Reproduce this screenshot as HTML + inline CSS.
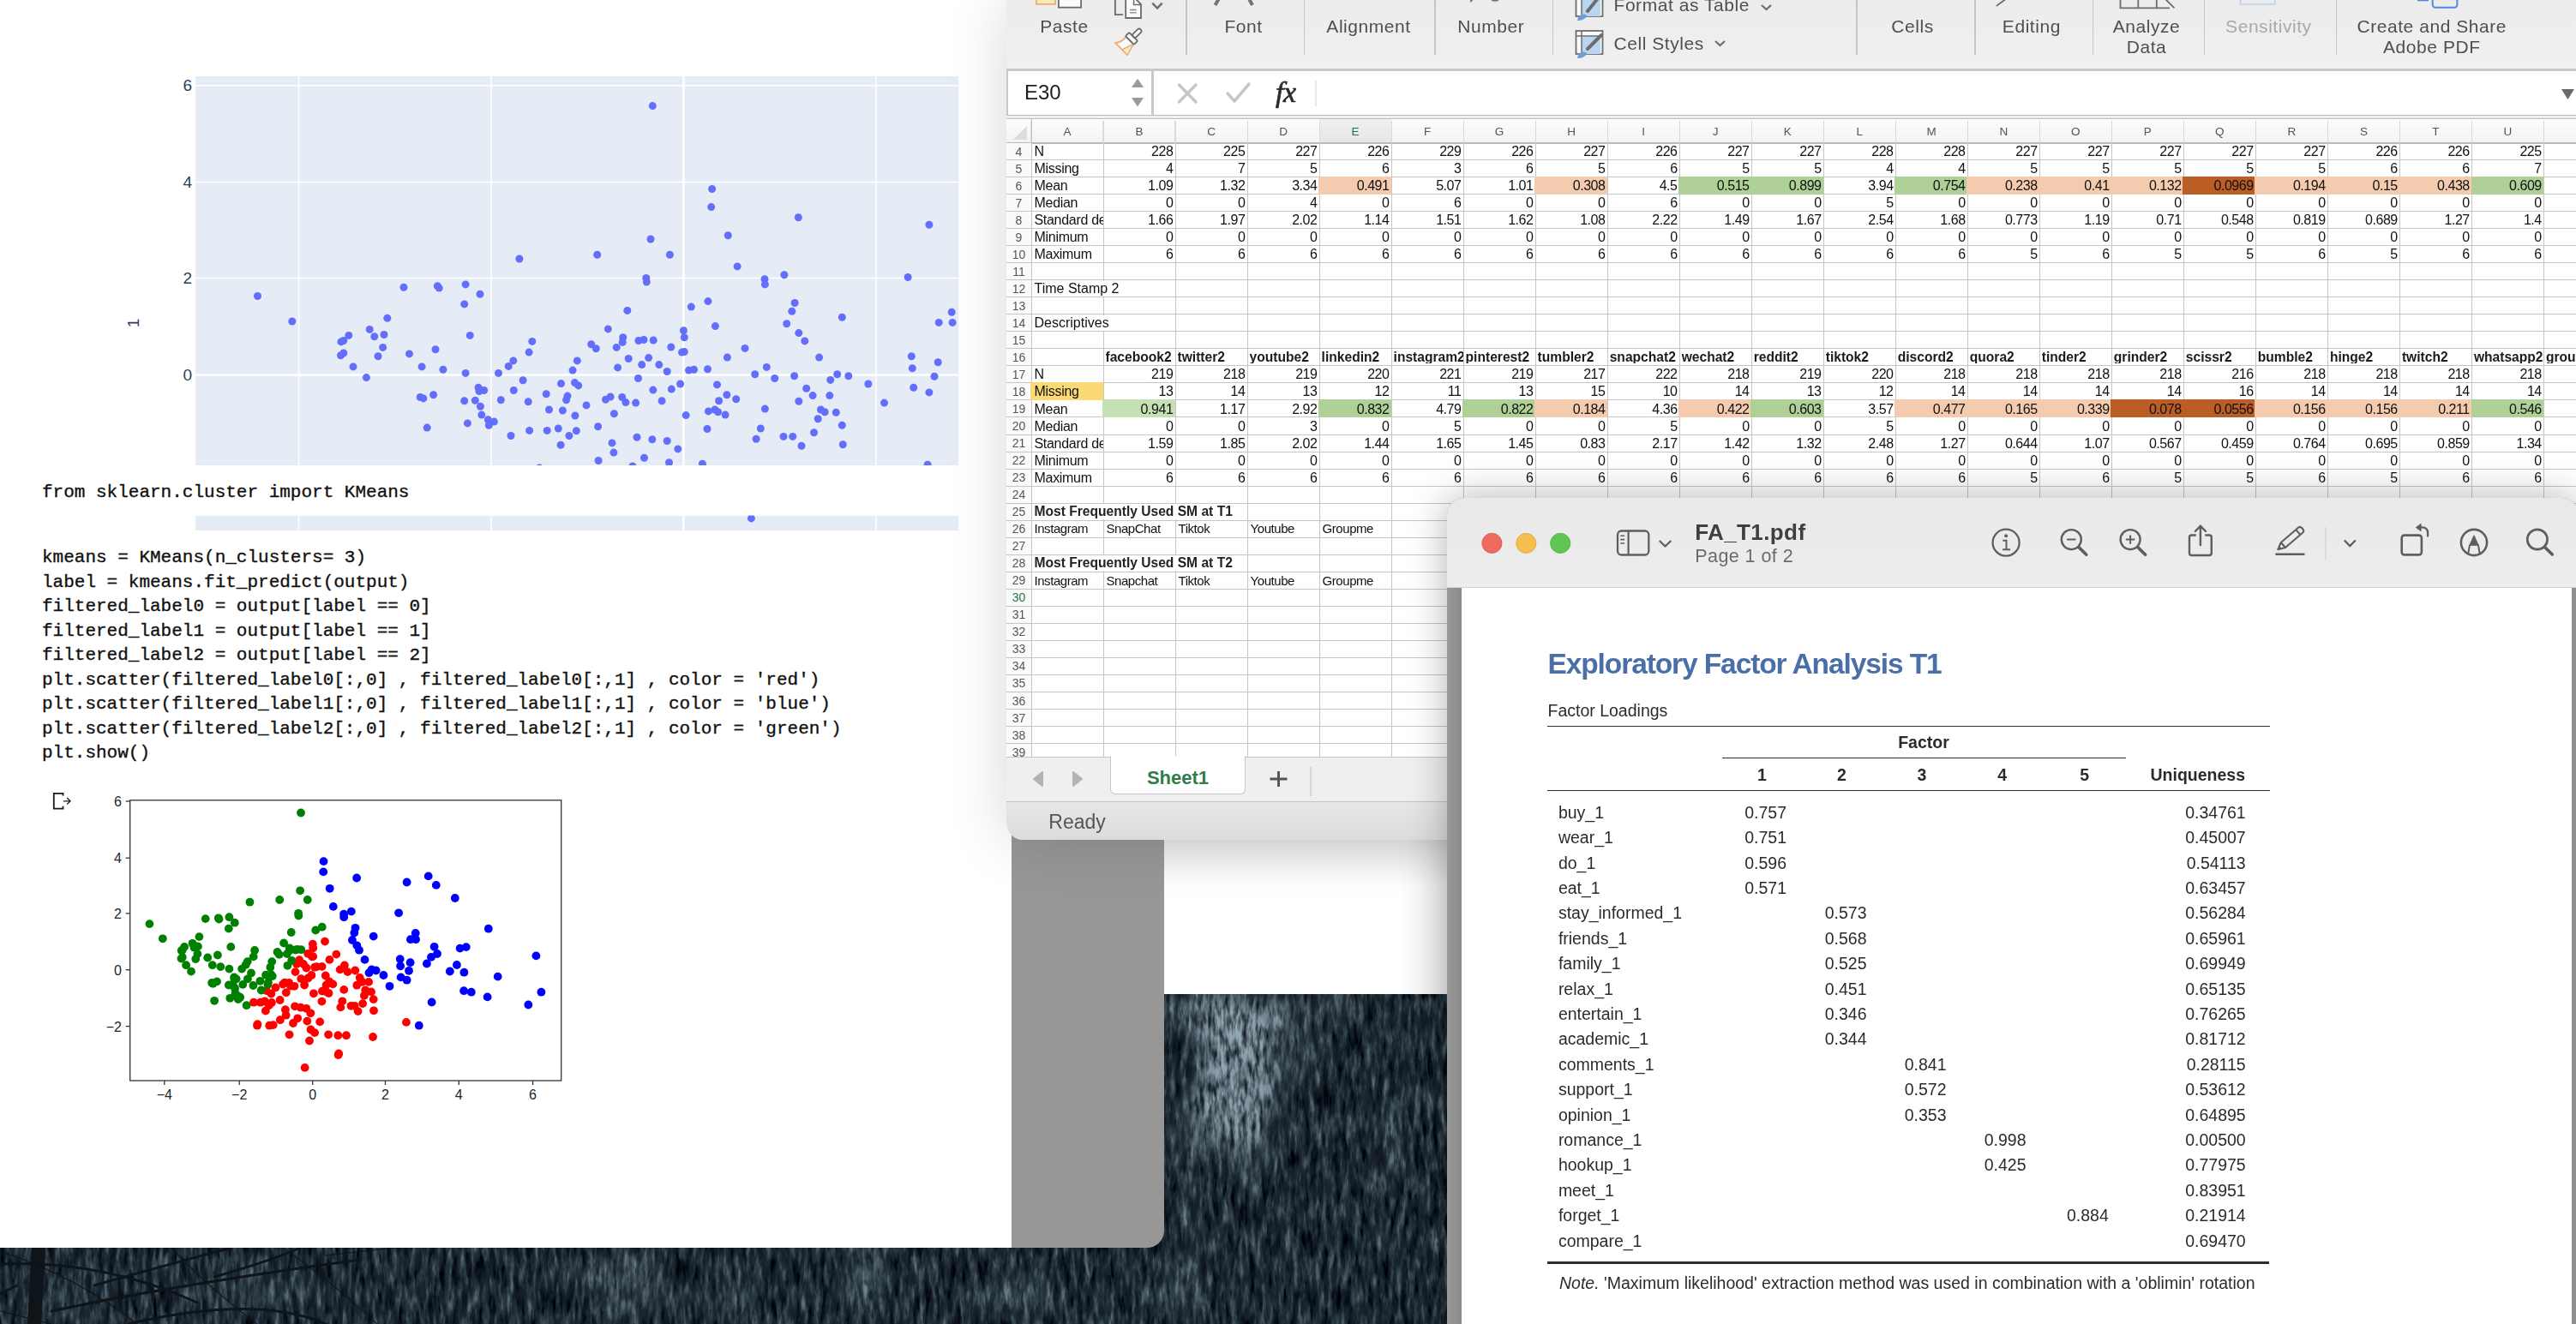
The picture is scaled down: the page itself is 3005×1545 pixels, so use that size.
<!DOCTYPE html>
<html><head><meta charset="utf-8"><style>
html,body{margin:0;padding:0;}
body{width:3005px;height:1545px;position:relative;overflow:hidden;background:#24313b;font-family:'Liberation Sans', sans-serif;}
.a{position:absolute;}
.t{position:absolute;white-space:pre;line-height:1;}



.xl{position:absolute;left:1174px;top:0;width:1831px;height:980px;overflow:hidden;border-bottom-left-radius:20px;background:#fff;box-shadow:0 0 70px rgba(0,0,0,0.16);}
.xt{position:absolute;white-space:pre;line-height:1;font-family:'Liberation Sans',sans-serif;}
.rb{position:absolute;white-space:pre;line-height:1;font-family:'Liberation Sans',sans-serif;font-size:21px;letter-spacing:0.55px;color:#4f4f4f;transform:translateX(-50%);}


.pdf{position:absolute;left:1687.7px;top:581px;width:1320px;height:1000px;border-radius:20px 20px 0 0;overflow:hidden;background:#8e8e8e;box-shadow:0 0 45px rgba(0,0,0,0.30);}
.pt{position:absolute;white-space:pre;line-height:1;font-family:'Liberation Sans',sans-serif;color:#2b2b2b;}
</style></head><body>
<svg style="position:absolute;left:0;top:0" width="3005" height="1545">
<filter id="fz" x="0" y="0" width="100%" height="100%" color-interpolation-filters="sRGB">
<feTurbulence type="fractalNoise" baseFrequency="0.14 0.03" numOctaves="4" seed="7"/>
<feColorMatrix type="matrix" values="0.75 0 0 0 -0.24  0.8 0 0 0 -0.21  0.8 0 0 0 -0.17  0 0 0 0 1"/>
</filter>
<filter id="fb" x="-50%" y="-50%" width="200%" height="200%"><feGaussianBlur stdDeviation="11"/></filter>
<filter id="fn2" x="0" y="0" width="100%" height="100%" color-interpolation-filters="sRGB">
<feTurbulence type="fractalNoise" baseFrequency="0.2 0.05" numOctaves="3" seed="11"/>
<feColorMatrix type="matrix" values="0 0 0 0 0.08  0 0 0 0 0.12  0 0 0 0 0.15  2.2 0 0 0 -0.75"/>
</filter>
<rect x="0" y="0" width="3005" height="1545" filter="url(#fz)"/>
<g filter="url(#fb)"><ellipse cx="1445" cy="1255" rx="45" ry="85" fill="#9cb3bd" opacity="0.85"/><ellipse cx="1415" cy="1185" rx="40" ry="30" fill="#9cb3bd" opacity="0.75"/><ellipse cx="1480" cy="1190" rx="35" ry="28" fill="#9cb3bd" opacity="0.55"/><ellipse cx="1400" cy="1310" rx="22" ry="45" fill="#9cb3bd" opacity="0.50"/><ellipse cx="1455" cy="1345" rx="20" ry="30" fill="#9cb3bd" opacity="0.45"/><ellipse cx="1625" cy="1330" rx="9" ry="55" fill="#9cb3bd" opacity="0.40"/><ellipse cx="1560" cy="1172" rx="28" ry="14" fill="#9cb3bd" opacity="0.35"/><ellipse cx="1385" cy="1420" rx="10" ry="28" fill="#9cb3bd" opacity="0.30"/><ellipse cx="1520" cy="1230" rx="18" ry="30" fill="#9cb3bd" opacity="0.30"/><ellipse cx="730" cy="1500" rx="45" ry="35" fill="#9cb3bd" opacity="0.35"/><ellipse cx="1010" cy="1490" rx="22" ry="40" fill="#9cb3bd" opacity="0.40"/><ellipse cx="860" cy="1520" rx="25" ry="22" fill="#9cb3bd" opacity="0.25"/><ellipse cx="1190" cy="1510" rx="35" ry="28" fill="#9cb3bd" opacity="0.30"/><ellipse cx="1380" cy="1500" rx="25" ry="35" fill="#9cb3bd" opacity="0.30"/><ellipse cx="80" cy="1520" rx="60" ry="20" fill="#9cb3bd" opacity="0.20"/><ellipse cx="300" cy="1500" rx="80" ry="30" fill="#9cb3bd" opacity="0.15"/></g>
<rect x="0" y="1100" width="1700" height="445" filter="url(#fn2)"/>
<g stroke="#0e1418" fill="none" stroke-linecap="round">
<path d="M45 1456 L40 1545" stroke-width="16"/>
<path d="M0 1475 Q120 1470 230 1520 M60 1530 Q200 1500 420 1470 M110 1500 Q180 1480 270 1456 M20 1500 L0 1510 M150 1545 Q300 1510 380 1545 M250 1490 Q320 1470 350 1456" stroke-width="3"/>
<path d="M0 1460 Q90 1490 160 1545 M200 1456 Q240 1500 300 1545 M330 1456 Q380 1490 440 1545 M380 1465 L460 1456 M0 1530 L60 1545" stroke-width="1.5" opacity="0.8"/>
</g>
</svg>
<div class="a" style="left:0;top:0;width:1180px;height:1456px;background:#fff"></div>
<div class="a" style="left:1180px;top:900px;width:178px;height:556px;background:#979797;border-bottom-right-radius:20px"></div>
<div class="a" style="left:1358px;top:900px;width:330px;height:260px;background:#fff"></div>
<div class="a" style="left:1358px;top:975px;width:330px;height:60px;background:linear-gradient(rgba(0,0,0,0.10),rgba(0,0,0,0))"></div>
<div class="a" style="left:1630px;top:975px;width:58px;height:185px;background:linear-gradient(90deg,rgba(0,0,0,0),rgba(0,0,0,0.07))"></div>
<svg class="a" style="left:0;top:0" width="1180" height="1456">
<defs><clipPath id="pc"><rect x="227.6" y="89.0" width="890.5" height="454.0"/></clipPath>
<clipPath id="pc2"><rect x="227.6" y="601.6" width="890.5" height="17.6"/></clipPath></defs>
<g clip-path="url(#pc)">
<rect x="227.6" y="89.0" width="890.5" height="454.0" fill="#e5ecf6"/>
<line x1="348.55" y1="89.0" x2="348.55" y2="543.0" stroke="#fff" stroke-width="1.5"/>
<line x1="572.90" y1="89.0" x2="572.90" y2="543.0" stroke="#fff" stroke-width="1.5"/>
<line x1="797.35" y1="89.0" x2="797.35" y2="543.0" stroke="#fff" stroke-width="2.5"/>
<line x1="1021.80" y1="89.0" x2="1021.80" y2="543.0" stroke="#fff" stroke-width="1.5"/>
<line x1="227.6" y1="99.7" x2="1118.1" y2="99.7" stroke="#fff" stroke-width="1.5"/>
<line x1="227.6" y1="212.5" x2="1118.1" y2="212.5" stroke="#fff" stroke-width="1.5"/>
<line x1="227.6" y1="324.4" x2="1118.1" y2="324.4" stroke="#fff" stroke-width="1.5"/>
<line x1="227.6" y1="437.4" x2="1118.1" y2="437.4" stroke="#fff" stroke-width="2.5"/>
<circle cx="761.3" cy="123.6" r="4.5" fill="#636efa"/>
<circle cx="830.6" cy="220.5" r="4.5" fill="#636efa"/>
<circle cx="829.7" cy="241.6" r="4.5" fill="#636efa"/>
<circle cx="931.3" cy="253.7" r="4.5" fill="#636efa"/>
<circle cx="1083.9" cy="262.2" r="4.5" fill="#636efa"/>
<circle cx="759.0" cy="279.0" r="4.5" fill="#636efa"/>
<circle cx="849.3" cy="274.8" r="4.5" fill="#636efa"/>
<circle cx="696.7" cy="297.3" r="4.5" fill="#636efa"/>
<circle cx="781.4" cy="297.3" r="4.5" fill="#636efa"/>
<circle cx="605.9" cy="302.0" r="4.5" fill="#636efa"/>
<circle cx="860.1" cy="310.9" r="4.5" fill="#636efa"/>
<circle cx="753.8" cy="324.4" r="4.5" fill="#636efa"/>
<circle cx="754.3" cy="329.1" r="4.5" fill="#636efa"/>
<circle cx="914.9" cy="320.7" r="4.5" fill="#636efa"/>
<circle cx="892.0" cy="325.8" r="4.5" fill="#636efa"/>
<circle cx="892.4" cy="331.9" r="4.5" fill="#636efa"/>
<circle cx="1059.1" cy="323.5" r="4.5" fill="#636efa"/>
<circle cx="300.5" cy="345.5" r="4.5" fill="#636efa"/>
<circle cx="471.0" cy="335.2" r="4.5" fill="#636efa"/>
<circle cx="510.3" cy="333.8" r="4.5" fill="#636efa"/>
<circle cx="512.2" cy="336.1" r="4.5" fill="#636efa"/>
<circle cx="543.1" cy="331.9" r="4.5" fill="#636efa"/>
<circle cx="560.0" cy="343.2" r="4.5" fill="#636efa"/>
<circle cx="541.7" cy="354.9" r="4.5" fill="#636efa"/>
<circle cx="825.9" cy="351.6" r="4.5" fill="#636efa"/>
<circle cx="927.1" cy="353.5" r="4.5" fill="#636efa"/>
<circle cx="806.3" cy="358.1" r="4.5" fill="#636efa"/>
<circle cx="731.8" cy="362.4" r="4.5" fill="#636efa"/>
<circle cx="923.8" cy="363.3" r="4.5" fill="#636efa"/>
<circle cx="451.8" cy="371.3" r="4.5" fill="#636efa"/>
<circle cx="982.3" cy="370.3" r="4.5" fill="#636efa"/>
<circle cx="340.8" cy="375.0" r="4.5" fill="#636efa"/>
<circle cx="1110.2" cy="364.2" r="4.5" fill="#636efa"/>
<circle cx="1095.2" cy="376.4" r="4.5" fill="#636efa"/>
<circle cx="1111.1" cy="376.4" r="4.5" fill="#636efa"/>
<circle cx="917.7" cy="377.8" r="4.5" fill="#636efa"/>
<circle cx="834.4" cy="380.6" r="4.5" fill="#636efa"/>
<circle cx="406.8" cy="391.4" r="4.5" fill="#636efa"/>
<circle cx="400.8" cy="397.5" r="4.5" fill="#636efa"/>
<circle cx="397.9" cy="398.9" r="4.5" fill="#636efa"/>
<circle cx="431.2" cy="384.4" r="4.5" fill="#636efa"/>
<circle cx="448.0" cy="390.5" r="4.5" fill="#636efa"/>
<circle cx="436.8" cy="392.8" r="4.5" fill="#636efa"/>
<circle cx="548.3" cy="391.4" r="4.5" fill="#636efa"/>
<circle cx="709.3" cy="383.9" r="4.5" fill="#636efa"/>
<circle cx="931.8" cy="388.6" r="4.5" fill="#636efa"/>
<circle cx="726.7" cy="393.7" r="4.5" fill="#636efa"/>
<circle cx="726.2" cy="399.4" r="4.5" fill="#636efa"/>
<circle cx="744.9" cy="397.5" r="4.5" fill="#636efa"/>
<circle cx="751.0" cy="396.5" r="4.5" fill="#636efa"/>
<circle cx="762.2" cy="397.0" r="4.5" fill="#636efa"/>
<circle cx="938.8" cy="397.9" r="4.5" fill="#636efa"/>
<circle cx="797.4" cy="385.8" r="4.5" fill="#636efa"/>
<circle cx="798.3" cy="393.7" r="4.5" fill="#636efa"/>
<circle cx="620.8" cy="398.4" r="4.5" fill="#636efa"/>
<circle cx="446.6" cy="405.4" r="4.5" fill="#636efa"/>
<circle cx="508.0" cy="407.8" r="4.5" fill="#636efa"/>
<circle cx="782.8" cy="405.0" r="4.5" fill="#636efa"/>
<circle cx="719.2" cy="405.4" r="4.5" fill="#636efa"/>
<circle cx="689.7" cy="401.7" r="4.5" fill="#636efa"/>
<circle cx="695.3" cy="406.8" r="4.5" fill="#636efa"/>
<circle cx="869.0" cy="406.4" r="4.5" fill="#636efa"/>
<circle cx="795.5" cy="411.1" r="4.5" fill="#636efa"/>
<circle cx="798.3" cy="410.6" r="4.5" fill="#636efa"/>
<circle cx="617.1" cy="411.1" r="4.5" fill="#636efa"/>
<circle cx="477.5" cy="412.9" r="4.5" fill="#636efa"/>
<circle cx="397.5" cy="414.8" r="4.5" fill="#636efa"/>
<circle cx="400.8" cy="412.0" r="4.5" fill="#636efa"/>
<circle cx="441.0" cy="415.7" r="4.5" fill="#636efa"/>
<circle cx="733.2" cy="418.5" r="4.5" fill="#636efa"/>
<circle cx="756.6" cy="417.6" r="4.5" fill="#636efa"/>
<circle cx="848.4" cy="417.1" r="4.5" fill="#636efa"/>
<circle cx="955.6" cy="417.1" r="4.5" fill="#636efa"/>
<circle cx="1063.3" cy="415.7" r="4.5" fill="#636efa"/>
<circle cx="673.3" cy="420.9" r="4.5" fill="#636efa"/>
<circle cx="598.8" cy="420.9" r="4.5" fill="#636efa"/>
<circle cx="1094.2" cy="422.8" r="4.5" fill="#636efa"/>
<circle cx="412.0" cy="427.9" r="4.5" fill="#636efa"/>
<circle cx="492.1" cy="427.9" r="4.5" fill="#636efa"/>
<circle cx="593.2" cy="427.4" r="4.5" fill="#636efa"/>
<circle cx="720.6" cy="428.9" r="4.5" fill="#636efa"/>
<circle cx="748.7" cy="425.6" r="4.5" fill="#636efa"/>
<circle cx="768.8" cy="425.6" r="4.5" fill="#636efa"/>
<circle cx="894.3" cy="428.4" r="4.5" fill="#636efa"/>
<circle cx="1064.3" cy="429.8" r="4.5" fill="#636efa"/>
<circle cx="516.9" cy="431.2" r="4.5" fill="#636efa"/>
<circle cx="668.1" cy="432.1" r="4.5" fill="#636efa"/>
<circle cx="778.2" cy="433.5" r="4.5" fill="#636efa"/>
<circle cx="803.5" cy="432.1" r="4.5" fill="#636efa"/>
<circle cx="809.5" cy="431.2" r="4.5" fill="#636efa"/>
<circle cx="825.5" cy="430.7" r="4.5" fill="#636efa"/>
<circle cx="543.1" cy="435.4" r="4.5" fill="#636efa"/>
<circle cx="581.5" cy="435.4" r="4.5" fill="#636efa"/>
<circle cx="880.7" cy="436.8" r="4.5" fill="#636efa"/>
<circle cx="427.4" cy="440.6" r="4.5" fill="#636efa"/>
<circle cx="744.5" cy="441.5" r="4.5" fill="#636efa"/>
<circle cx="903.7" cy="441.5" r="4.5" fill="#636efa"/>
<circle cx="926.6" cy="438.7" r="4.5" fill="#636efa"/>
<circle cx="976.7" cy="436.8" r="4.5" fill="#636efa"/>
<circle cx="989.8" cy="438.7" r="4.5" fill="#636efa"/>
<circle cx="1090.0" cy="439.2" r="4.5" fill="#636efa"/>
<circle cx="610.1" cy="443.8" r="4.5" fill="#636efa"/>
<circle cx="968.7" cy="443.4" r="4.5" fill="#636efa"/>
<circle cx="654.5" cy="447.6" r="4.5" fill="#636efa"/>
<circle cx="670.5" cy="446.6" r="4.5" fill="#636efa"/>
<circle cx="674.7" cy="449.9" r="4.5" fill="#636efa"/>
<circle cx="793.6" cy="448.0" r="4.5" fill="#636efa"/>
<circle cx="1012.8" cy="448.0" r="4.5" fill="#636efa"/>
<circle cx="558.1" cy="452.3" r="4.5" fill="#636efa"/>
<circle cx="559.0" cy="456.5" r="4.5" fill="#636efa"/>
<circle cx="564.6" cy="455.5" r="4.5" fill="#636efa"/>
<circle cx="599.3" cy="455.5" r="4.5" fill="#636efa"/>
<circle cx="761.8" cy="455.1" r="4.5" fill="#636efa"/>
<circle cx="783.3" cy="454.1" r="4.5" fill="#636efa"/>
<circle cx="940.7" cy="453.2" r="4.5" fill="#636efa"/>
<circle cx="1065.7" cy="452.3" r="4.5" fill="#636efa"/>
<circle cx="637.2" cy="459.8" r="4.5" fill="#636efa"/>
<circle cx="662.0" cy="462.1" r="4.5" fill="#636efa"/>
<circle cx="505.6" cy="460.7" r="4.5" fill="#636efa"/>
<circle cx="490.2" cy="463.5" r="4.5" fill="#636efa"/>
<circle cx="493.9" cy="464.9" r="4.5" fill="#636efa"/>
<circle cx="584.3" cy="466.8" r="4.5" fill="#636efa"/>
<circle cx="541.7" cy="467.7" r="4.5" fill="#636efa"/>
<circle cx="554.3" cy="467.2" r="4.5" fill="#636efa"/>
<circle cx="616.2" cy="468.7" r="4.5" fill="#636efa"/>
<circle cx="660.6" cy="466.8" r="4.5" fill="#636efa"/>
<circle cx="706.5" cy="466.3" r="4.5" fill="#636efa"/>
<circle cx="712.1" cy="463.0" r="4.5" fill="#636efa"/>
<circle cx="725.7" cy="463.5" r="4.5" fill="#636efa"/>
<circle cx="729.9" cy="469.6" r="4.5" fill="#636efa"/>
<circle cx="741.6" cy="470.1" r="4.5" fill="#636efa"/>
<circle cx="772.1" cy="467.7" r="4.5" fill="#636efa"/>
<circle cx="838.6" cy="467.7" r="4.5" fill="#636efa"/>
<circle cx="847.9" cy="460.7" r="4.5" fill="#636efa"/>
<circle cx="858.7" cy="465.8" r="4.5" fill="#636efa"/>
<circle cx="931.8" cy="468.2" r="4.5" fill="#636efa"/>
<circle cx="948.1" cy="461.6" r="4.5" fill="#636efa"/>
<circle cx="967.8" cy="461.6" r="4.5" fill="#636efa"/>
<circle cx="1031.5" cy="470.1" r="4.5" fill="#636efa"/>
<circle cx="1083.9" cy="457.9" r="4.5" fill="#636efa"/>
<circle cx="560.4" cy="474.3" r="4.5" fill="#636efa"/>
<circle cx="684.0" cy="472.9" r="4.5" fill="#636efa"/>
<circle cx="640.5" cy="478.0" r="4.5" fill="#636efa"/>
<circle cx="656.4" cy="479.0" r="4.5" fill="#636efa"/>
<circle cx="892.4" cy="477.1" r="4.5" fill="#636efa"/>
<circle cx="826.4" cy="479.9" r="4.5" fill="#636efa"/>
<circle cx="833.9" cy="478.0" r="4.5" fill="#636efa"/>
<circle cx="837.6" cy="480.8" r="4.5" fill="#636efa"/>
<circle cx="957.5" cy="478.0" r="4.5" fill="#636efa"/>
<circle cx="962.2" cy="480.8" r="4.5" fill="#636efa"/>
<circle cx="975.3" cy="481.3" r="4.5" fill="#636efa"/>
<circle cx="561.8" cy="484.1" r="4.5" fill="#636efa"/>
<circle cx="670.9" cy="485.0" r="4.5" fill="#636efa"/>
<circle cx="716.4" cy="482.7" r="4.5" fill="#636efa"/>
<circle cx="800.2" cy="484.6" r="4.5" fill="#636efa"/>
<circle cx="846.1" cy="484.1" r="4.5" fill="#636efa"/>
<circle cx="954.2" cy="488.8" r="4.5" fill="#636efa"/>
<circle cx="569.3" cy="489.7" r="4.5" fill="#636efa"/>
<circle cx="576.4" cy="492.1" r="4.5" fill="#636efa"/>
<circle cx="570.3" cy="496.3" r="4.5" fill="#636efa"/>
<circle cx="545.4" cy="493.9" r="4.5" fill="#636efa"/>
<circle cx="498.2" cy="499.1" r="4.5" fill="#636efa"/>
<circle cx="638.2" cy="502.4" r="4.5" fill="#636efa"/>
<circle cx="617.6" cy="502.4" r="4.5" fill="#636efa"/>
<circle cx="651.3" cy="500.0" r="4.5" fill="#636efa"/>
<circle cx="672.3" cy="502.8" r="4.5" fill="#636efa"/>
<circle cx="697.6" cy="497.7" r="4.5" fill="#636efa"/>
<circle cx="825.0" cy="500.5" r="4.5" fill="#636efa"/>
<circle cx="887.3" cy="500.0" r="4.5" fill="#636efa"/>
<circle cx="982.3" cy="496.3" r="4.5" fill="#636efa"/>
<circle cx="949.5" cy="504.7" r="4.5" fill="#636efa"/>
<circle cx="596.0" cy="508.5" r="4.5" fill="#636efa"/>
<circle cx="663.9" cy="508.5" r="4.5" fill="#636efa"/>
<circle cx="743.0" cy="510.3" r="4.5" fill="#636efa"/>
<circle cx="760.8" cy="512.7" r="4.5" fill="#636efa"/>
<circle cx="882.1" cy="512.2" r="4.5" fill="#636efa"/>
<circle cx="914.0" cy="509.4" r="4.5" fill="#636efa"/>
<circle cx="924.7" cy="509.4" r="4.5" fill="#636efa"/>
<circle cx="778.2" cy="514.5" r="4.5" fill="#636efa"/>
<circle cx="714.0" cy="516.9" r="4.5" fill="#636efa"/>
<circle cx="654.1" cy="519.2" r="4.5" fill="#636efa"/>
<circle cx="983.3" cy="518.8" r="4.5" fill="#636efa"/>
<circle cx="935.0" cy="520.2" r="4.5" fill="#636efa"/>
<circle cx="790.8" cy="523.9" r="4.5" fill="#636efa"/>
<circle cx="715.9" cy="528.1" r="4.5" fill="#636efa"/>
<circle cx="751.5" cy="534.2" r="4.5" fill="#636efa"/>
<circle cx="698.1" cy="537.5" r="4.5" fill="#636efa"/>
<circle cx="780.5" cy="539.8" r="4.5" fill="#636efa"/>
<circle cx="819.4" cy="541.2" r="4.5" fill="#636efa"/>
<circle cx="1082.1" cy="542.2" r="4.5" fill="#636efa"/>
<circle cx="737.9" cy="544.0" r="4.5" fill="#636efa"/>
<circle cx="629.3" cy="545.9" r="4.5" fill="#636efa"/>
<circle cx="876.4" cy="604.9" r="4.5" fill="#636efa"/>
<circle cx="836.5" cy="448.9" r="4.5" fill="#636efa"/>
<circle cx="1149.4" cy="250.0" r="4.5" fill="#636efa"/>
<circle cx="1173.0" cy="268.1" r="4.5" fill="#636efa"/>
<circle cx="1230.5" cy="294.0" r="4.5" fill="#636efa"/>
<circle cx="1332.2" cy="355.1" r="4.5" fill="#636efa"/>
<circle cx="1167.5" cy="391.3" r="4.5" fill="#636efa"/>
<circle cx="1176.2" cy="405.3" r="4.5" fill="#636efa"/>
<circle cx="1158.0" cy="412.0" r="4.5" fill="#636efa"/>
<circle cx="1144.6" cy="424.9" r="4.5" fill="#636efa"/>
<circle cx="1236.1" cy="427.5" r="4.5" fill="#636efa"/>
<circle cx="1214.8" cy="440.4" r="4.5" fill="#636efa"/>
<circle cx="1258.1" cy="442.5" r="4.5" fill="#636efa"/>
<circle cx="1245.5" cy="394.4" r="4.5" fill="#636efa"/>
<circle cx="1264.4" cy="391.8" r="4.5" fill="#636efa"/>
<circle cx="1360.6" cy="450.8" r="4.5" fill="#636efa"/>
<circle cx="1257.4" cy="479.3" r="4.5" fill="#636efa"/>
<circle cx="1280.2" cy="481.8" r="4.5" fill="#636efa"/>
<circle cx="1329.1" cy="491.7" r="4.5" fill="#636efa"/>
<circle cx="1477.3" cy="409.4" r="4.5" fill="#636efa"/>
<circle cx="1493.1" cy="481.8" r="4.5" fill="#636efa"/>
<circle cx="1453.6" cy="507.2" r="4.5" fill="#636efa"/>
<circle cx="1159.6" cy="502.0" r="4.5" fill="#636efa"/>
<circle cx="1121.0" cy="548.6" r="4.5" fill="#636efa"/>
<circle cx="628.3" cy="548.6" r="4.5" fill="#636efa"/>
<circle cx="665.3" cy="548.6" r="4.5" fill="#636efa"/>
<circle cx="677.2" cy="547.6" r="4.5" fill="#636efa"/>
<circle cx="726.0" cy="566.7" r="4.5" fill="#636efa"/>
<circle cx="787.5" cy="579.1" r="4.5" fill="#636efa"/>
<circle cx="803.3" cy="563.1" r="4.5" fill="#636efa"/>
<circle cx="791.5" cy="556.9" r="4.5" fill="#636efa"/>
<circle cx="845.1" cy="566.7" r="4.5" fill="#636efa"/>
<circle cx="874.2" cy="568.3" r="4.5" fill="#636efa"/>
<circle cx="899.5" cy="568.3" r="4.5" fill="#636efa"/>
<circle cx="980.7" cy="571.4" r="4.5" fill="#636efa"/>
<circle cx="875.0" cy="607.6" r="4.5" fill="#636efa"/>
<circle cx="773.3" cy="633.0" r="4.5" fill="#636efa"/>
</g>
<g clip-path="url(#pc2)">
<rect x="227.6" y="601.6" width="890.5" height="17.6" fill="#e5ecf6"/>
<line x1="348.55" y1="601.6" x2="348.55" y2="619.2" stroke="#fff" stroke-width="1.5"/>
<line x1="572.90" y1="601.6" x2="572.90" y2="619.2" stroke="#fff" stroke-width="1.5"/>
<line x1="797.35" y1="601.6" x2="797.35" y2="619.2" stroke="#fff" stroke-width="2.5"/>
<line x1="1021.80" y1="601.6" x2="1021.80" y2="619.2" stroke="#fff" stroke-width="1.5"/>
<circle cx="876.4" cy="604.9" r="4.5" fill="#636efa"/>
</g>
<text x="224" y="106.3" font-family='Liberation Sans' font-size="19" fill="#2a3f5f" text-anchor="end">6</text>
<text x="224" y="219.1" font-family='Liberation Sans' font-size="19" fill="#2a3f5f" text-anchor="end">4</text>
<text x="224" y="331.0" font-family='Liberation Sans' font-size="19" fill="#2a3f5f" text-anchor="end">2</text>
<text x="224" y="443.9" font-family='Liberation Sans' font-size="19" fill="#2a3f5f" text-anchor="end">0</text>
<text transform="translate(162,377) rotate(-90)" font-family='Liberation Sans' font-size="19" fill="#2a3f5f" text-anchor="middle">1</text>
<circle cx="379.0" cy="1098.6" r="4.9" fill="#ff0000"/>
<circle cx="364.8" cy="1101.6" r="4.9" fill="#ff0000"/>
<circle cx="365.2" cy="1106.3" r="4.9" fill="#ff0000"/>
<circle cx="359.2" cy="1112.8" r="4.9" fill="#ff0000"/>
<circle cx="392.3" cy="1113.6" r="4.9" fill="#ff0000"/>
<circle cx="364.1" cy="1116.4" r="4.9" fill="#ff0000"/>
<circle cx="365.2" cy="1116.1" r="4.9" fill="#ff0000"/>
<circle cx="349.2" cy="1120.2" r="4.9" fill="#ff0000"/>
<circle cx="384.4" cy="1119.9" r="4.9" fill="#ff0000"/>
<circle cx="346.1" cy="1124.9" r="4.9" fill="#ff0000"/>
<circle cx="353.9" cy="1124.9" r="4.9" fill="#ff0000"/>
<circle cx="401.9" cy="1126.5" r="4.9" fill="#ff0000"/>
<circle cx="357.4" cy="1129.5" r="4.9" fill="#ff0000"/>
<circle cx="367.1" cy="1128.7" r="4.9" fill="#ff0000"/>
<circle cx="369.5" cy="1128.1" r="4.9" fill="#ff0000"/>
<circle cx="375.6" cy="1127.9" r="4.9" fill="#ff0000"/>
<circle cx="396.7" cy="1131.4" r="4.9" fill="#ff0000"/>
<circle cx="344.5" cy="1134.1" r="4.9" fill="#ff0000"/>
<circle cx="405.5" cy="1134.1" r="4.9" fill="#ff0000"/>
<circle cx="414.3" cy="1132.5" r="4.9" fill="#ff0000"/>
<circle cx="363.4" cy="1138.0" r="4.9" fill="#ff0000"/>
<circle cx="351.2" cy="1142.1" r="4.9" fill="#ff0000"/>
<circle cx="359.4" cy="1141.5" r="4.9" fill="#ff0000"/>
<circle cx="419.7" cy="1141.0" r="4.9" fill="#ff0000"/>
<circle cx="330.0" cy="1148.6" r="4.9" fill="#ff0000"/>
<circle cx="332.1" cy="1146.7" r="4.9" fill="#ff0000"/>
<circle cx="337.3" cy="1147.0" r="4.9" fill="#ff0000"/>
<circle cx="339.0" cy="1150.6" r="4.9" fill="#ff0000"/>
<circle cx="343.4" cy="1150.8" r="4.9" fill="#ff0000"/>
<circle cx="355.1" cy="1149.5" r="4.9" fill="#ff0000"/>
<circle cx="380.6" cy="1149.5" r="4.9" fill="#ff0000"/>
<circle cx="384.2" cy="1145.4" r="4.9" fill="#ff0000"/>
<circle cx="388.3" cy="1148.4" r="4.9" fill="#ff0000"/>
<circle cx="416.3" cy="1149.7" r="4.9" fill="#ff0000"/>
<circle cx="422.6" cy="1145.9" r="4.9" fill="#ff0000"/>
<circle cx="430.1" cy="1145.9" r="4.9" fill="#ff0000"/>
<circle cx="321.4" cy="1152.5" r="4.9" fill="#ff0000"/>
<circle cx="310.8" cy="1156.0" r="4.9" fill="#ff0000"/>
<circle cx="401.2" cy="1154.9" r="4.9" fill="#ff0000"/>
<circle cx="375.9" cy="1156.6" r="4.9" fill="#ff0000"/>
<circle cx="378.8" cy="1155.5" r="4.9" fill="#ff0000"/>
<circle cx="380.2" cy="1157.1" r="4.9" fill="#ff0000"/>
<circle cx="426.2" cy="1155.5" r="4.9" fill="#ff0000"/>
<circle cx="428.0" cy="1157.1" r="4.9" fill="#ff0000"/>
<circle cx="433.0" cy="1157.4" r="4.9" fill="#ff0000"/>
<circle cx="316.3" cy="1159.6" r="4.9" fill="#ff0000"/>
<circle cx="333.8" cy="1158.2" r="4.9" fill="#ff0000"/>
<circle cx="365.9" cy="1159.3" r="4.9" fill="#ff0000"/>
<circle cx="383.5" cy="1159.0" r="4.9" fill="#ff0000"/>
<circle cx="424.9" cy="1161.8" r="4.9" fill="#ff0000"/>
<circle cx="303.8" cy="1169.7" r="4.9" fill="#ff0000"/>
<circle cx="295.9" cy="1169.7" r="4.9" fill="#ff0000"/>
<circle cx="308.8" cy="1168.3" r="4.9" fill="#ff0000"/>
<circle cx="316.9" cy="1170.0" r="4.9" fill="#ff0000"/>
<circle cx="326.6" cy="1167.0" r="4.9" fill="#ff0000"/>
<circle cx="375.4" cy="1168.6" r="4.9" fill="#ff0000"/>
<circle cx="399.3" cy="1168.3" r="4.9" fill="#ff0000"/>
<circle cx="435.7" cy="1166.1" r="4.9" fill="#ff0000"/>
<circle cx="423.1" cy="1171.1" r="4.9" fill="#ff0000"/>
<circle cx="313.7" cy="1173.2" r="4.9" fill="#ff0000"/>
<circle cx="344.0" cy="1174.3" r="4.9" fill="#ff0000"/>
<circle cx="350.8" cy="1175.7" r="4.9" fill="#ff0000"/>
<circle cx="397.3" cy="1175.4" r="4.9" fill="#ff0000"/>
<circle cx="409.5" cy="1173.8" r="4.9" fill="#ff0000"/>
<circle cx="413.6" cy="1173.8" r="4.9" fill="#ff0000"/>
<circle cx="357.4" cy="1176.8" r="4.9" fill="#ff0000"/>
<circle cx="332.9" cy="1178.2" r="4.9" fill="#ff0000"/>
<circle cx="309.9" cy="1179.5" r="4.9" fill="#ff0000"/>
<circle cx="436.0" cy="1179.3" r="4.9" fill="#ff0000"/>
<circle cx="417.6" cy="1180.1" r="4.9" fill="#ff0000"/>
<circle cx="362.3" cy="1182.3" r="4.9" fill="#ff0000"/>
<circle cx="333.6" cy="1184.7" r="4.9" fill="#ff0000"/>
<circle cx="347.2" cy="1188.3" r="4.9" fill="#ff0000"/>
<circle cx="326.8" cy="1190.2" r="4.9" fill="#ff0000"/>
<circle cx="358.3" cy="1191.6" r="4.9" fill="#ff0000"/>
<circle cx="373.2" cy="1192.4" r="4.9" fill="#ff0000"/>
<circle cx="473.9" cy="1192.9" r="4.9" fill="#ff0000"/>
<circle cx="342.0" cy="1194.0" r="4.9" fill="#ff0000"/>
<circle cx="300.4" cy="1195.1" r="4.9" fill="#ff0000"/>
<circle cx="395.1" cy="1229.5" r="4.9" fill="#ff0000"/>
<circle cx="379.8" cy="1138.5" r="4.9" fill="#ff0000"/>
<circle cx="300.0" cy="1196.7" r="4.9" fill="#ff0000"/>
<circle cx="314.2" cy="1196.7" r="4.9" fill="#ff0000"/>
<circle cx="318.7" cy="1196.1" r="4.9" fill="#ff0000"/>
<circle cx="337.5" cy="1207.3" r="4.9" fill="#ff0000"/>
<circle cx="361.0" cy="1214.5" r="4.9" fill="#ff0000"/>
<circle cx="367.1" cy="1205.1" r="4.9" fill="#ff0000"/>
<circle cx="362.5" cy="1201.5" r="4.9" fill="#ff0000"/>
<circle cx="383.1" cy="1207.3" r="4.9" fill="#ff0000"/>
<circle cx="394.3" cy="1208.2" r="4.9" fill="#ff0000"/>
<circle cx="403.9" cy="1208.2" r="4.9" fill="#ff0000"/>
<circle cx="435.0" cy="1210.0" r="4.9" fill="#ff0000"/>
<circle cx="394.6" cy="1231.1" r="4.9" fill="#ff0000"/>
<circle cx="355.6" cy="1245.9" r="4.9" fill="#ff0000"/>
<circle cx="377.5" cy="1005.1" r="4.9" fill="#0000ff"/>
<circle cx="377.2" cy="1017.4" r="4.9" fill="#0000ff"/>
<circle cx="416.1" cy="1024.5" r="4.9" fill="#0000ff"/>
<circle cx="474.6" cy="1029.5" r="4.9" fill="#0000ff"/>
<circle cx="384.7" cy="1036.8" r="4.9" fill="#0000ff"/>
<circle cx="388.8" cy="1057.9" r="4.9" fill="#0000ff"/>
<circle cx="409.8" cy="1063.6" r="4.9" fill="#0000ff"/>
<circle cx="401.1" cy="1066.6" r="4.9" fill="#0000ff"/>
<circle cx="401.2" cy="1070.2" r="4.9" fill="#0000ff"/>
<circle cx="465.1" cy="1065.3" r="4.9" fill="#0000ff"/>
<circle cx="414.5" cy="1082.8" r="4.9" fill="#0000ff"/>
<circle cx="413.3" cy="1088.5" r="4.9" fill="#0000ff"/>
<circle cx="435.7" cy="1092.6" r="4.9" fill="#0000ff"/>
<circle cx="484.7" cy="1089.0" r="4.9" fill="#0000ff"/>
<circle cx="478.9" cy="1096.2" r="4.9" fill="#0000ff"/>
<circle cx="485.0" cy="1096.2" r="4.9" fill="#0000ff"/>
<circle cx="410.9" cy="1097.0" r="4.9" fill="#0000ff"/>
<circle cx="416.3" cy="1103.3" r="4.9" fill="#0000ff"/>
<circle cx="419.0" cy="1108.7" r="4.9" fill="#0000ff"/>
<circle cx="425.5" cy="1119.9" r="4.9" fill="#0000ff"/>
<circle cx="466.7" cy="1119.1" r="4.9" fill="#0000ff"/>
<circle cx="478.6" cy="1123.2" r="4.9" fill="#0000ff"/>
<circle cx="467.1" cy="1127.3" r="4.9" fill="#0000ff"/>
<circle cx="433.5" cy="1131.4" r="4.9" fill="#0000ff"/>
<circle cx="438.6" cy="1132.5" r="4.9" fill="#0000ff"/>
<circle cx="477.0" cy="1132.8" r="4.9" fill="#0000ff"/>
<circle cx="430.5" cy="1135.2" r="4.9" fill="#0000ff"/>
<circle cx="447.4" cy="1138.0" r="4.9" fill="#0000ff"/>
<circle cx="467.6" cy="1140.4" r="4.9" fill="#0000ff"/>
<circle cx="454.5" cy="1150.8" r="4.9" fill="#0000ff"/>
<circle cx="474.6" cy="1143.7" r="4.9" fill="#0000ff"/>
<circle cx="499.7" cy="1022.4" r="4.9" fill="#0000ff"/>
<circle cx="508.8" cy="1032.9" r="4.9" fill="#0000ff"/>
<circle cx="530.8" cy="1048.0" r="4.9" fill="#0000ff"/>
<circle cx="569.8" cy="1083.7" r="4.9" fill="#0000ff"/>
<circle cx="506.6" cy="1104.8" r="4.9" fill="#0000ff"/>
<circle cx="510.0" cy="1113.0" r="4.9" fill="#0000ff"/>
<circle cx="503.0" cy="1116.9" r="4.9" fill="#0000ff"/>
<circle cx="497.9" cy="1124.5" r="4.9" fill="#0000ff"/>
<circle cx="532.9" cy="1126.0" r="4.9" fill="#0000ff"/>
<circle cx="524.8" cy="1133.5" r="4.9" fill="#0000ff"/>
<circle cx="541.4" cy="1134.7" r="4.9" fill="#0000ff"/>
<circle cx="536.6" cy="1106.6" r="4.9" fill="#0000ff"/>
<circle cx="543.8" cy="1105.1" r="4.9" fill="#0000ff"/>
<circle cx="580.7" cy="1139.6" r="4.9" fill="#0000ff"/>
<circle cx="541.1" cy="1156.2" r="4.9" fill="#0000ff"/>
<circle cx="549.8" cy="1157.7" r="4.9" fill="#0000ff"/>
<circle cx="568.6" cy="1163.4" r="4.9" fill="#0000ff"/>
<circle cx="625.4" cy="1115.4" r="4.9" fill="#0000ff"/>
<circle cx="631.4" cy="1157.7" r="4.9" fill="#0000ff"/>
<circle cx="616.3" cy="1172.5" r="4.9" fill="#0000ff"/>
<circle cx="503.6" cy="1169.5" r="4.9" fill="#0000ff"/>
<circle cx="488.8" cy="1196.7" r="4.9" fill="#0000ff"/>
<circle cx="351.0" cy="948.5" r="4.9" fill="#008000"/>
<circle cx="350.1" cy="1039.3" r="4.9" fill="#008000"/>
<circle cx="326.2" cy="1050.0" r="4.9" fill="#008000"/>
<circle cx="358.7" cy="1050.0" r="4.9" fill="#008000"/>
<circle cx="291.4" cy="1052.7" r="4.9" fill="#008000"/>
<circle cx="348.1" cy="1065.8" r="4.9" fill="#008000"/>
<circle cx="348.3" cy="1068.5" r="4.9" fill="#008000"/>
<circle cx="174.4" cy="1078.1" r="4.9" fill="#008000"/>
<circle cx="239.7" cy="1072.1" r="4.9" fill="#008000"/>
<circle cx="254.8" cy="1071.3" r="4.9" fill="#008000"/>
<circle cx="255.5" cy="1072.6" r="4.9" fill="#008000"/>
<circle cx="267.4" cy="1070.2" r="4.9" fill="#008000"/>
<circle cx="273.8" cy="1076.7" r="4.9" fill="#008000"/>
<circle cx="266.8" cy="1083.6" r="4.9" fill="#008000"/>
<circle cx="375.7" cy="1081.7" r="4.9" fill="#008000"/>
<circle cx="368.2" cy="1085.5" r="4.9" fill="#008000"/>
<circle cx="339.7" cy="1088.0" r="4.9" fill="#008000"/>
<circle cx="232.4" cy="1093.1" r="4.9" fill="#008000"/>
<circle cx="189.8" cy="1095.3" r="4.9" fill="#008000"/>
<circle cx="215.1" cy="1104.9" r="4.9" fill="#008000"/>
<circle cx="212.8" cy="1108.5" r="4.9" fill="#008000"/>
<circle cx="211.7" cy="1109.3" r="4.9" fill="#008000"/>
<circle cx="224.5" cy="1100.8" r="4.9" fill="#008000"/>
<circle cx="230.9" cy="1104.4" r="4.9" fill="#008000"/>
<circle cx="226.6" cy="1105.7" r="4.9" fill="#008000"/>
<circle cx="269.3" cy="1104.9" r="4.9" fill="#008000"/>
<circle cx="331.1" cy="1100.5" r="4.9" fill="#008000"/>
<circle cx="337.7" cy="1106.3" r="4.9" fill="#008000"/>
<circle cx="337.5" cy="1109.5" r="4.9" fill="#008000"/>
<circle cx="344.7" cy="1108.5" r="4.9" fill="#008000"/>
<circle cx="347.0" cy="1107.9" r="4.9" fill="#008000"/>
<circle cx="351.3" cy="1108.2" r="4.9" fill="#008000"/>
<circle cx="297.1" cy="1109.0" r="4.9" fill="#008000"/>
<circle cx="230.4" cy="1113.1" r="4.9" fill="#008000"/>
<circle cx="253.9" cy="1114.5" r="4.9" fill="#008000"/>
<circle cx="334.8" cy="1113.1" r="4.9" fill="#008000"/>
<circle cx="323.5" cy="1110.9" r="4.9" fill="#008000"/>
<circle cx="325.7" cy="1113.9" r="4.9" fill="#008000"/>
<circle cx="295.7" cy="1116.4" r="4.9" fill="#008000"/>
<circle cx="242.2" cy="1117.5" r="4.9" fill="#008000"/>
<circle cx="211.5" cy="1118.6" r="4.9" fill="#008000"/>
<circle cx="212.8" cy="1116.9" r="4.9" fill="#008000"/>
<circle cx="228.2" cy="1119.1" r="4.9" fill="#008000"/>
<circle cx="340.2" cy="1120.8" r="4.9" fill="#008000"/>
<circle cx="317.2" cy="1122.1" r="4.9" fill="#008000"/>
<circle cx="288.7" cy="1122.1" r="4.9" fill="#008000"/>
<circle cx="217.1" cy="1126.2" r="4.9" fill="#008000"/>
<circle cx="247.8" cy="1126.2" r="4.9" fill="#008000"/>
<circle cx="286.6" cy="1125.9" r="4.9" fill="#008000"/>
<circle cx="335.4" cy="1126.8" r="4.9" fill="#008000"/>
<circle cx="257.3" cy="1128.1" r="4.9" fill="#008000"/>
<circle cx="315.3" cy="1128.7" r="4.9" fill="#008000"/>
<circle cx="267.4" cy="1130.6" r="4.9" fill="#008000"/>
<circle cx="282.1" cy="1130.6" r="4.9" fill="#008000"/>
<circle cx="223.0" cy="1133.6" r="4.9" fill="#008000"/>
<circle cx="293.0" cy="1135.5" r="4.9" fill="#008000"/>
<circle cx="310.1" cy="1137.7" r="4.9" fill="#008000"/>
<circle cx="316.2" cy="1137.2" r="4.9" fill="#008000"/>
<circle cx="317.8" cy="1139.1" r="4.9" fill="#008000"/>
<circle cx="273.1" cy="1140.4" r="4.9" fill="#008000"/>
<circle cx="273.5" cy="1142.9" r="4.9" fill="#008000"/>
<circle cx="275.6" cy="1142.3" r="4.9" fill="#008000"/>
<circle cx="288.9" cy="1142.3" r="4.9" fill="#008000"/>
<circle cx="303.4" cy="1144.8" r="4.9" fill="#008000"/>
<circle cx="312.9" cy="1146.2" r="4.9" fill="#008000"/>
<circle cx="253.0" cy="1145.4" r="4.9" fill="#008000"/>
<circle cx="247.1" cy="1147.0" r="4.9" fill="#008000"/>
<circle cx="248.5" cy="1147.8" r="4.9" fill="#008000"/>
<circle cx="283.2" cy="1148.9" r="4.9" fill="#008000"/>
<circle cx="266.8" cy="1149.5" r="4.9" fill="#008000"/>
<circle cx="271.7" cy="1149.2" r="4.9" fill="#008000"/>
<circle cx="295.4" cy="1150.0" r="4.9" fill="#008000"/>
<circle cx="312.4" cy="1148.9" r="4.9" fill="#008000"/>
<circle cx="274.0" cy="1153.3" r="4.9" fill="#008000"/>
<circle cx="304.7" cy="1155.5" r="4.9" fill="#008000"/>
<circle cx="274.5" cy="1159.0" r="4.9" fill="#008000"/>
<circle cx="277.4" cy="1162.3" r="4.9" fill="#008000"/>
<circle cx="280.1" cy="1163.7" r="4.9" fill="#008000"/>
<circle cx="277.8" cy="1166.1" r="4.9" fill="#008000"/>
<circle cx="268.3" cy="1164.8" r="4.9" fill="#008000"/>
<circle cx="250.1" cy="1167.8" r="4.9" fill="#008000"/>
<circle cx="287.6" cy="1173.2" r="4.9" fill="#008000"/>
<rect x="151.7" y="933.8" width="503.0" height="327.2" fill="none" stroke="#333" stroke-width="1.3"/>
<line x1="146.7" y1="935.0" x2="151.7" y2="935.0" stroke="#333" stroke-width="1.3"/>
<text x="142" y="941.0" font-family='Liberation Sans' font-size="16" fill="#262626" text-anchor="end">6</text>
<line x1="146.7" y1="1001.2" x2="151.7" y2="1001.2" stroke="#333" stroke-width="1.3"/>
<text x="142" y="1007.2" font-family='Liberation Sans' font-size="16" fill="#262626" text-anchor="end">4</text>
<line x1="146.7" y1="1065.9" x2="151.7" y2="1065.9" stroke="#333" stroke-width="1.3"/>
<text x="142" y="1071.9" font-family='Liberation Sans' font-size="16" fill="#262626" text-anchor="end">2</text>
<line x1="146.7" y1="1131.7" x2="151.7" y2="1131.7" stroke="#333" stroke-width="1.3"/>
<text x="142" y="1137.7" font-family='Liberation Sans' font-size="16" fill="#262626" text-anchor="end">0</text>
<line x1="146.7" y1="1197.6" x2="151.7" y2="1197.6" stroke="#333" stroke-width="1.3"/>
<text x="142" y="1203.6" font-family='Liberation Sans' font-size="16" fill="#262626" text-anchor="end">−2</text>
<line x1="191.8" y1="1261.0" x2="191.8" y2="1266.0" stroke="#333" stroke-width="1.3"/>
<text x="191.8" y="1283" font-family='Liberation Sans' font-size="16" fill="#262626" text-anchor="middle">−4</text>
<line x1="279.2" y1="1261.0" x2="279.2" y2="1266.0" stroke="#333" stroke-width="1.3"/>
<text x="279.2" y="1283" font-family='Liberation Sans' font-size="16" fill="#262626" text-anchor="middle">−2</text>
<line x1="364.7" y1="1261.0" x2="364.7" y2="1266.0" stroke="#333" stroke-width="1.3"/>
<text x="364.7" y="1283" font-family='Liberation Sans' font-size="16" fill="#262626" text-anchor="middle">0</text>
<line x1="449.5" y1="1261.0" x2="449.5" y2="1266.0" stroke="#333" stroke-width="1.3"/>
<text x="449.5" y="1283" font-family='Liberation Sans' font-size="16" fill="#262626" text-anchor="middle">2</text>
<line x1="535.3" y1="1261.0" x2="535.3" y2="1266.0" stroke="#333" stroke-width="1.3"/>
<text x="535.3" y="1283" font-family='Liberation Sans' font-size="16" fill="#262626" text-anchor="middle">4</text>
<line x1="621.5" y1="1261.0" x2="621.5" y2="1266.0" stroke="#333" stroke-width="1.3"/>
<text x="621.5" y="1283" font-family='Liberation Sans' font-size="16" fill="#262626" text-anchor="middle">6</text>
<path d="M73.5 928.5 V925.8 H62.8 V943.6 H73.5 V940.8" fill="none" stroke="#1a1a1a" stroke-width="1.8"/><path d="M74 934.8 H82 M78.2 931 L82 934.8 L78.2 938.6" fill="none" stroke="#1a1a1a" stroke-width="1.3"/>
</svg>
<div class="t" style="left:49px;top:564px;font-family:'Liberation Mono', monospace;font-size:21px;color:#111;-webkit-text-stroke:0.35px #111">from sklearn.cluster import KMeans</div>
<div class="t" style="left:49px;top:640.0px;font-family:'Liberation Mono', monospace;font-size:21px;color:#111;-webkit-text-stroke:0.35px #111">kmeans = KMeans(n_clusters= 3)</div>
<div class="t" style="left:49px;top:668.5px;font-family:'Liberation Mono', monospace;font-size:21px;color:#111;-webkit-text-stroke:0.35px #111">label = kmeans.fit_predict(output)</div>
<div class="t" style="left:49px;top:697.0px;font-family:'Liberation Mono', monospace;font-size:21px;color:#111;-webkit-text-stroke:0.35px #111">filtered_label0 = output[label == 0]</div>
<div class="t" style="left:49px;top:725.5px;font-family:'Liberation Mono', monospace;font-size:21px;color:#111;-webkit-text-stroke:0.35px #111">filtered_label1 = output[label == 1]</div>
<div class="t" style="left:49px;top:754.0px;font-family:'Liberation Mono', monospace;font-size:21px;color:#111;-webkit-text-stroke:0.35px #111">filtered_label2 = output[label == 2]</div>
<div class="t" style="left:49px;top:782.5px;font-family:'Liberation Mono', monospace;font-size:21px;color:#111;-webkit-text-stroke:0.35px #111">plt.scatter(filtered_label0[:,0] , filtered_label0[:,1] , color = 'red')</div>
<div class="t" style="left:49px;top:811.0px;font-family:'Liberation Mono', monospace;font-size:21px;color:#111;-webkit-text-stroke:0.35px #111">plt.scatter(filtered_label1[:,0] , filtered_label1[:,1] , color = 'blue')</div>
<div class="t" style="left:49px;top:839.5px;font-family:'Liberation Mono', monospace;font-size:21px;color:#111;-webkit-text-stroke:0.35px #111">plt.scatter(filtered_label2[:,0] , filtered_label2[:,1] , color = 'green')</div>
<div class="t" style="left:49px;top:868.0px;font-family:'Liberation Mono', monospace;font-size:21px;color:#111;-webkit-text-stroke:0.35px #111">plt.show()</div>
<div class="xl">
<div class="a" style="left:0;top:0;width:1831px;height:80px;background:linear-gradient(#ececec,#f0f0f0)"></div>
<div class="a" style="left:0;top:80px;width:1831px;height:3px;background:#c9c9c9"></div>
<div class="a" style="left:209.0px;top:0;width:1.5px;height:64px;background:#c6c6c6"></div>
<div class="a" style="left:346.8px;top:0;width:1.5px;height:64px;background:#c6c6c6"></div>
<div class="a" style="left:499.0px;top:0;width:1.5px;height:64px;background:#c6c6c6"></div>
<div class="a" style="left:636.5px;top:0;width:1.5px;height:64px;background:#c6c6c6"></div>
<div class="a" style="left:991.0px;top:0;width:1.5px;height:64px;background:#c6c6c6"></div>
<div class="a" style="left:1129.1px;top:0;width:1.5px;height:64px;background:#c6c6c6"></div>
<div class="a" style="left:1266.8px;top:0;width:1.5px;height:64px;background:#c6c6c6"></div>
<div class="a" style="left:1396.8px;top:0;width:1.5px;height:64px;background:#c6c6c6"></div>
<div class="a" style="left:1550.7px;top:0;width:1.5px;height:64px;background:#c6c6c6"></div>
<div class="rb" style="left:67.5px;top:20.2px">Paste</div>
<div class="rb" style="left:276.6px;top:20.2px">Font</div>
<div class="rb" style="left:422.5px;top:20.2px">Alignment</div>
<div class="rb" style="left:565.3px;top:20.2px">Number</div>
<div class="rb" style="left:1057.0px;top:20.2px">Cells</div>
<div class="rb" style="left:1195.9px;top:20.2px">Editing</div>
<div class="rb" style="left:1330.0px;top:20.2px">Analyze</div>
<div class="rb" style="left:1330.0px;top:43.7px">Data</div>
<div class="rb" style="left:1662.8px;top:20.2px">Create and Share</div>
<div class="rb" style="left:1662.8px;top:43.7px">Adobe PDF</div>
<div class="rb" style="left:1472.4px;top:20.2px;color:#a8a8a8">Sensitivity</div>
<div class="xt" style="left:708.5px;top:-4.6px;font-size:21px;letter-spacing:0.55px;color:#4f4f4f">Format as Table</div>
<div class="xt" style="left:708.5px;top:40.0px;font-size:21px;letter-spacing:0.55px;color:#4f4f4f">Cell Styles</div>
<svg class="a" style="left:0;top:0" width="1831" height="80">
<rect x="34.8" y="-10" width="22.2" height="14.9" fill="#f9e9b8" stroke="#eba977" stroke-width="1.7"/>
<rect x="60.9" y="-10" width="26.2" height="18.7" fill="#fafafa" stroke="#6b6b6b" stroke-width="1.8"/>
<path d="M126.9 -2 V17.2 H136.0" fill="none" stroke="#6b6b6b" stroke-width="1.8"/>
<path d="M139.2 -3 H149.0 L157.0 5 V21 H139.2 Z" fill="#fafafa" stroke="#6b6b6b" stroke-width="1.8"/>
<path d="M148.6 -2 V5.5 H157.0" fill="none" stroke="#6b6b6b" stroke-width="1.5"/>
<path d="M144.0 11.5 H151.8 M144.0 14.9 H151.8" stroke="#8a8a8a" stroke-width="1.4"/>
<path d="M170.3 3.6 L176.0 9.6 L181.7 3.6" fill="none" stroke="#6b6b6b" stroke-width="2.3"/>
<g transform="translate(134.0 57) rotate(-45)">
<path d="M14 -6 Q5 -5 0 -10 L0 10 L14 6 Z" fill="#fafafa" stroke="#eba977" stroke-width="1.7" stroke-linejoin="round"/>
<path d="M1.5 2 L13 5.5 L1 9.2 Z" fill="#f9e9b8"/><path d="M0.5 1.5 L14 6" stroke="#eba977" stroke-width="1.5"/>
<rect x="14" y="-7" width="6" height="14" rx="1.2" fill="#fafafa" stroke="#6b6b6b" stroke-width="1.8"/>
<rect x="20" y="-2.6" width="12" height="5.2" rx="2.6" fill="#fafafa" stroke="#6b6b6b" stroke-width="1.8"/>
</g>
<path d="M243.5 6 L250.5 -6 M280.5 -6 L287.0 6" stroke="#737373" stroke-width="4"/>
<path d="M541.0 1.8 Q543.0 1 544.0 -2" fill="none" stroke="#737373" stroke-width="2"/><ellipse cx="570.0" cy="-3" rx="6" ry="4.8" fill="#737373"/>
<rect x="664.5" y="-12.0" width="31" height="31.0" fill="#fafafa" stroke="#6d6d6d" stroke-width="1.8"/>
<rect x="671.0" y="-6.0" width="22" height="25.0" fill="#b9d5f2" />
<path d="M664.5 -6.0 H695.5 M671.0 -12.0 V19.0" stroke="#6d6d6d" stroke-width="1.5"/>
<path d="M678.0 13.0 L694.0 -7.0" stroke="#6d6d6d" stroke-width="4" stroke-linecap="round"/>
<path d="M667.0 20.0 q6 -6 10 -2 q-2 6 -11 6 z" fill="#6d9ed8"/>
<rect x="664.5" y="36.0" width="31" height="27.0" fill="#fafafa" stroke="#6d6d6d" stroke-width="1.8"/>
<rect x="671.0" y="42.0" width="22" height="21.0" fill="#b9d5f2" />
<path d="M664.5 42.0 H695.5 M671.0 36.0 V63.0" stroke="#6d6d6d" stroke-width="1.5"/>
<path d="M678.0 57.0 L694.0 41.0" stroke="#6d6d6d" stroke-width="4" stroke-linecap="round"/>
<path d="M667.0 64.0 q6 -6 10 -2 q-2 6 -11 6 z" fill="#6d9ed8"/>
<path d="M881.0 6 L886.5 11 L892.0 6" fill="none" stroke="#6d6d6d" stroke-width="2.2"/>
<path d="M827.0 48 L832.5 53 L838.0 48" fill="none" stroke="#6d6d6d" stroke-width="2.2"/>
<path d="M1154.8 7 L1165.0 -0.5" stroke="#6d6d6d" stroke-width="1.8"/>
<path d="M1299.5 -10 V9.3 H1357.0 M1320.3 -10 V9.3 M1341.8 -10 V9.3 M1352.0 -1 L1362.5 9.3" fill="none" stroke="#6d6d6d" stroke-width="1.8"/>
<rect x="1439.5" y="-10" width="40.5" height="14.9" fill="none" stroke="#b5cde8" stroke-width="1.3"/>
<rect x="1663.7" y="-10" width="28.7" height="18.8" rx="3.5" fill="none" stroke="#4f86e0" stroke-width="2"/><path d="M1646.0 0.3 H1659.0" stroke="#4f86e0" stroke-width="2"/>
</svg>
<div class="a" style="left:0;top:83px;width:1831px;height:51px;background:#fff"></div>
<div class="a" style="left:168.5px;top:83px;width:3px;height:51px;background:#c9c9c9"></div>
<div class="a" style="left:0;top:83px;width:2px;height:51px;background:#c9c9c9"></div>
<div class="a" style="left:0;top:133.5px;width:1831px;height:1.5px;background:#bdbdbd"></div>
<div class="a" style="left:0;top:135px;width:1831px;height:3px;background:#efefef"></div>
<div class="a" style="left:0;top:137.5px;width:1831px;height:1.5px;background:#bdbdbd"></div>
<div class="xt" style="left:21.0px;top:96.0px;font-size:24px;color:#1d1d1d">E30</div>
<svg class="a" style="left:0;top:83px" width="1831" height="51">
<path d="M146.0 19 L153.0 8.8 L160.0 19 Z M146.0 31 L153.0 41.4 L160.0 31 Z" fill="#9b9b9b"/>
<path d="M201.5 16 L221.0 36 M221.0 16 L201.5 36" stroke="#c6c6c6" stroke-width="3.5" stroke-linecap="round"/>
<path d="M258.0 26 L266.0 35 L283.0 15" fill="none" stroke="#c6c6c6" stroke-width="3.5" stroke-linecap="round" stroke-linejoin="round"/>
<text x="314.0" y="35.5" font-family="Liberation Serif" font-style="italic" font-size="34" fill="#2b2b2b" stroke="#2b2b2b" stroke-width="0.7" letter-spacing="-0.5">fx</text>
<path d="M361.0 11 V41" stroke="#e2e2e2" stroke-width="1.5"/>
<path d="M1814.0 21 L1821.5 33 L1829.0 21 Z" fill="#6a6a6a"/>
</svg>
<div class="a" style="left:0;top:139px;width:1831px;height:28px;background:linear-gradient(#fdfdfd,#f3f3f3)"></div>
<div class="a" style="left:365.1px;top:139px;width:84.0px;height:28px;background:linear-gradient(#f0f0f0,#e6e6e6)"></div>
<div class="a" style="left:0;top:166px;width:1831px;height:1.5px;background:#b9b9b9"></div>
<svg class="a" style="left:0;top:139px" width="29" height="28"><path d="M24 8 V24 H8 Z" fill="#dcdcdc"/></svg>
<div class="xt" style="left:29.0px;top:146.5px;width:84.0px;text-align:center;font-size:13.5px;color:#555">A</div>
<div class="xt" style="left:113.0px;top:146.5px;width:84.0px;text-align:center;font-size:13.5px;color:#555">B</div>
<div class="xt" style="left:197.0px;top:146.5px;width:84.0px;text-align:center;font-size:13.5px;color:#555">C</div>
<div class="xt" style="left:281.1px;top:146.5px;width:84.0px;text-align:center;font-size:13.5px;color:#555">D</div>
<div class="xt" style="left:365.1px;top:146.5px;width:84.0px;text-align:center;font-size:13.5px;color:#217346">E</div>
<div class="xt" style="left:449.1px;top:146.5px;width:84.0px;text-align:center;font-size:13.5px;color:#555">F</div>
<div class="xt" style="left:533.1px;top:146.5px;width:84.0px;text-align:center;font-size:13.5px;color:#555">G</div>
<div class="xt" style="left:617.1px;top:146.5px;width:84.0px;text-align:center;font-size:13.5px;color:#555">H</div>
<div class="xt" style="left:701.2px;top:146.5px;width:84.0px;text-align:center;font-size:13.5px;color:#555">I</div>
<div class="xt" style="left:785.2px;top:146.5px;width:84.0px;text-align:center;font-size:13.5px;color:#555">J</div>
<div class="xt" style="left:869.2px;top:146.5px;width:84.0px;text-align:center;font-size:13.5px;color:#555">K</div>
<div class="xt" style="left:953.2px;top:146.5px;width:84.0px;text-align:center;font-size:13.5px;color:#555">L</div>
<div class="xt" style="left:1037.2px;top:146.5px;width:84.0px;text-align:center;font-size:13.5px;color:#555">M</div>
<div class="xt" style="left:1121.3px;top:146.5px;width:84.0px;text-align:center;font-size:13.5px;color:#555">N</div>
<div class="xt" style="left:1205.3px;top:146.5px;width:84.0px;text-align:center;font-size:13.5px;color:#555">O</div>
<div class="xt" style="left:1289.3px;top:146.5px;width:84.0px;text-align:center;font-size:13.5px;color:#555">P</div>
<div class="xt" style="left:1373.3px;top:146.5px;width:84.0px;text-align:center;font-size:13.5px;color:#555">Q</div>
<div class="xt" style="left:1457.3px;top:146.5px;width:84.0px;text-align:center;font-size:13.5px;color:#555">R</div>
<div class="xt" style="left:1541.4px;top:146.5px;width:84.0px;text-align:center;font-size:13.5px;color:#555">S</div>
<div class="xt" style="left:1625.4px;top:146.5px;width:84.0px;text-align:center;font-size:13.5px;color:#555">T</div>
<div class="xt" style="left:1709.4px;top:146.5px;width:84.0px;text-align:center;font-size:13.5px;color:#555">U</div>
<div class="xt" style="left:1793.4px;top:146.5px;width:84.0px;text-align:center;font-size:13.5px;color:#555">V</div>
<div class="a" style="left:28.4px;top:141px;width:1.2px;height:26px;background:#dadada"></div>
<div class="a" style="left:112.4px;top:141px;width:1.2px;height:26px;background:#dadada"></div>
<div class="a" style="left:196.4px;top:141px;width:1.2px;height:26px;background:#dadada"></div>
<div class="a" style="left:280.5px;top:141px;width:1.2px;height:26px;background:#dadada"></div>
<div class="a" style="left:364.5px;top:141px;width:1.2px;height:26px;background:#dadada"></div>
<div class="a" style="left:448.5px;top:141px;width:1.2px;height:26px;background:#dadada"></div>
<div class="a" style="left:532.5px;top:141px;width:1.2px;height:26px;background:#dadada"></div>
<div class="a" style="left:616.5px;top:141px;width:1.2px;height:26px;background:#dadada"></div>
<div class="a" style="left:700.6px;top:141px;width:1.2px;height:26px;background:#dadada"></div>
<div class="a" style="left:784.6px;top:141px;width:1.2px;height:26px;background:#dadada"></div>
<div class="a" style="left:868.6px;top:141px;width:1.2px;height:26px;background:#dadada"></div>
<div class="a" style="left:952.6px;top:141px;width:1.2px;height:26px;background:#dadada"></div>
<div class="a" style="left:1036.6px;top:141px;width:1.2px;height:26px;background:#dadada"></div>
<div class="a" style="left:1120.7px;top:141px;width:1.2px;height:26px;background:#dadada"></div>
<div class="a" style="left:1204.7px;top:141px;width:1.2px;height:26px;background:#dadada"></div>
<div class="a" style="left:1288.7px;top:141px;width:1.2px;height:26px;background:#dadada"></div>
<div class="a" style="left:1372.7px;top:141px;width:1.2px;height:26px;background:#dadada"></div>
<div class="a" style="left:1456.7px;top:141px;width:1.2px;height:26px;background:#dadada"></div>
<div class="a" style="left:1540.8px;top:141px;width:1.2px;height:26px;background:#dadada"></div>
<div class="a" style="left:1624.8px;top:141px;width:1.2px;height:26px;background:#dadada"></div>
<div class="a" style="left:1708.8px;top:141px;width:1.2px;height:26px;background:#dadada"></div>
<div class="a" style="left:1792.8px;top:141px;width:1.2px;height:26px;background:#dadada"></div>
<div class="a" style="left:1876.8px;top:141px;width:1.2px;height:26px;background:#dadada"></div>
<div class="a" style="left:0;top:167px;width:29px;height:716px;background:#fafafa"></div>
<div class="a" style="left:28.5px;top:139px;width:1.5px;height:744px;background:#c3c3c3"></div>
<div class="a" style="left:0;top:186px;width:1831px;height:1px;background:#c6c6c6"></div>
<div class="a" style="left:0;top:206px;width:1831px;height:1px;background:#c6c6c6"></div>
<div class="a" style="left:0;top:226px;width:1831px;height:1px;background:#c6c6c6"></div>
<div class="a" style="left:0;top:246px;width:1831px;height:1px;background:#c6c6c6"></div>
<div class="a" style="left:0;top:266px;width:1831px;height:1px;background:#c6c6c6"></div>
<div class="a" style="left:0;top:286px;width:1831px;height:1px;background:#c6c6c6"></div>
<div class="a" style="left:0;top:306px;width:1831px;height:1px;background:#c6c6c6"></div>
<div class="a" style="left:0;top:326px;width:1831px;height:1px;background:#c6c6c6"></div>
<div class="a" style="left:0;top:346px;width:1831px;height:1px;background:#c6c6c6"></div>
<div class="a" style="left:0;top:366px;width:1831px;height:1px;background:#c6c6c6"></div>
<div class="a" style="left:0;top:386px;width:1831px;height:1px;background:#c6c6c6"></div>
<div class="a" style="left:0;top:406px;width:1831px;height:1px;background:#c6c6c6"></div>
<div class="a" style="left:0;top:426px;width:1831px;height:1px;background:#c6c6c6"></div>
<div class="a" style="left:0;top:446px;width:1831px;height:1px;background:#c6c6c6"></div>
<div class="a" style="left:0;top:466px;width:1831px;height:1px;background:#c6c6c6"></div>
<div class="a" style="left:0;top:486px;width:1831px;height:1px;background:#c6c6c6"></div>
<div class="a" style="left:0;top:507px;width:1831px;height:1px;background:#c6c6c6"></div>
<div class="a" style="left:0;top:527px;width:1831px;height:1px;background:#c6c6c6"></div>
<div class="a" style="left:0;top:547px;width:1831px;height:1px;background:#c6c6c6"></div>
<div class="a" style="left:0;top:567px;width:1831px;height:1px;background:#c6c6c6"></div>
<div class="a" style="left:0;top:587px;width:1831px;height:1px;background:#c6c6c6"></div>
<div class="a" style="left:0;top:607px;width:1831px;height:1px;background:#c6c6c6"></div>
<div class="a" style="left:0;top:627px;width:1831px;height:1px;background:#c6c6c6"></div>
<div class="a" style="left:0;top:647px;width:1831px;height:1px;background:#c6c6c6"></div>
<div class="a" style="left:0;top:667px;width:1831px;height:1px;background:#c6c6c6"></div>
<div class="a" style="left:0;top:687px;width:1831px;height:1px;background:#c6c6c6"></div>
<div class="a" style="left:0;top:707px;width:1831px;height:1px;background:#c6c6c6"></div>
<div class="a" style="left:0;top:727px;width:1831px;height:1px;background:#c6c6c6"></div>
<div class="a" style="left:0;top:747px;width:1831px;height:1px;background:#c6c6c6"></div>
<div class="a" style="left:0;top:767px;width:1831px;height:1px;background:#c6c6c6"></div>
<div class="a" style="left:0;top:787px;width:1831px;height:1px;background:#c6c6c6"></div>
<div class="a" style="left:0;top:807px;width:1831px;height:1px;background:#c6c6c6"></div>
<div class="a" style="left:0;top:827px;width:1831px;height:1px;background:#c6c6c6"></div>
<div class="a" style="left:0;top:847px;width:1831px;height:1px;background:#c6c6c6"></div>
<div class="a" style="left:0;top:867px;width:1831px;height:1px;background:#c6c6c6"></div>
<div class="a" style="left:0;top:887px;width:1831px;height:1px;background:#c6c6c6"></div>
<div class="a" style="left:113px;top:167px;width:1px;height:716px;background:#c6c6c6"></div>
<div class="a" style="left:197px;top:167px;width:1px;height:716px;background:#c6c6c6"></div>
<div class="a" style="left:281px;top:167px;width:1px;height:716px;background:#c6c6c6"></div>
<div class="a" style="left:365px;top:167px;width:1px;height:716px;background:#c6c6c6"></div>
<div class="a" style="left:449px;top:167px;width:1px;height:716px;background:#c6c6c6"></div>
<div class="a" style="left:533px;top:167px;width:1px;height:716px;background:#c6c6c6"></div>
<div class="a" style="left:617px;top:167px;width:1px;height:716px;background:#c6c6c6"></div>
<div class="a" style="left:701px;top:167px;width:1px;height:716px;background:#c6c6c6"></div>
<div class="a" style="left:785px;top:167px;width:1px;height:716px;background:#c6c6c6"></div>
<div class="a" style="left:869px;top:167px;width:1px;height:716px;background:#c6c6c6"></div>
<div class="a" style="left:953px;top:167px;width:1px;height:716px;background:#c6c6c6"></div>
<div class="a" style="left:1037px;top:167px;width:1px;height:716px;background:#c6c6c6"></div>
<div class="a" style="left:1121px;top:167px;width:1px;height:716px;background:#c6c6c6"></div>
<div class="a" style="left:1205px;top:167px;width:1px;height:716px;background:#c6c6c6"></div>
<div class="a" style="left:1289px;top:167px;width:1px;height:716px;background:#c6c6c6"></div>
<div class="a" style="left:1373px;top:167px;width:1px;height:716px;background:#c6c6c6"></div>
<div class="a" style="left:1457px;top:167px;width:1px;height:716px;background:#c6c6c6"></div>
<div class="a" style="left:1541px;top:167px;width:1px;height:716px;background:#c6c6c6"></div>
<div class="a" style="left:1625px;top:167px;width:1px;height:716px;background:#c6c6c6"></div>
<div class="a" style="left:1709px;top:167px;width:1px;height:716px;background:#c6c6c6"></div>
<div class="a" style="left:1793px;top:167px;width:1px;height:716px;background:#c6c6c6"></div>
<div class="a" style="left:1877px;top:167px;width:1px;height:716px;background:#c6c6c6"></div>
<div class="a" style="left:111.5px;top:327.5px;width:3px;height:18.4px;background:#fff"></div>
<div class="a" style="left:111.5px;top:367.6px;width:3px;height:18.4px;background:#fff"></div>
<div class="a" style="left:111.5px;top:587.9px;width:3px;height:18.4px;background:#fff"></div>
<div class="a" style="left:195.5px;top:587.9px;width:3px;height:18.4px;background:#fff"></div>
<div class="a" style="left:111.5px;top:648.0px;width:3px;height:18.4px;background:#fff"></div>
<div class="a" style="left:195.5px;top:648.0px;width:3px;height:18.4px;background:#fff"></div>
<div class="a" style="left:364.2px;top:205.8px;width:84.9px;height:20.8px;background:#f4cbae"></div>
<div class="a" style="left:616.2px;top:205.8px;width:84.9px;height:20.8px;background:#f4cbae"></div>
<div class="a" style="left:784.3px;top:205.8px;width:84.9px;height:20.8px;background:#afd096"></div>
<div class="a" style="left:868.3px;top:205.8px;width:84.9px;height:20.8px;background:#afd096"></div>
<div class="a" style="left:1036.3px;top:205.8px;width:84.9px;height:20.8px;background:#afd096"></div>
<div class="a" style="left:1120.4px;top:205.8px;width:84.9px;height:20.8px;background:#f4cbae"></div>
<div class="a" style="left:1204.4px;top:205.8px;width:84.9px;height:20.8px;background:#f4cbae"></div>
<div class="a" style="left:1288.4px;top:205.8px;width:84.9px;height:20.8px;background:#f4cbae"></div>
<div class="a" style="left:1372.4px;top:205.8px;width:84.9px;height:20.8px;background:#ba5e26"></div>
<div class="a" style="left:1456.4px;top:205.8px;width:84.9px;height:20.8px;background:#f4cbae"></div>
<div class="a" style="left:1540.5px;top:205.8px;width:84.9px;height:20.8px;background:#f4cbae"></div>
<div class="a" style="left:1624.5px;top:205.8px;width:84.9px;height:20.8px;background:#f4cbae"></div>
<div class="a" style="left:1708.5px;top:205.8px;width:84.9px;height:20.8px;background:#afd096"></div>
<div class="a" style="left:112.1px;top:466.2px;width:84.9px;height:20.8px;background:#c5e0b3"></div>
<div class="a" style="left:364.2px;top:466.2px;width:84.9px;height:20.8px;background:#afd096"></div>
<div class="a" style="left:532.2px;top:466.2px;width:84.9px;height:20.8px;background:#afd096"></div>
<div class="a" style="left:616.2px;top:466.2px;width:84.9px;height:20.8px;background:#f4cbae"></div>
<div class="a" style="left:784.3px;top:466.2px;width:84.9px;height:20.8px;background:#f4cbae"></div>
<div class="a" style="left:868.3px;top:466.2px;width:84.9px;height:20.8px;background:#afd096"></div>
<div class="a" style="left:1036.3px;top:466.2px;width:84.9px;height:20.8px;background:#f4cbae"></div>
<div class="a" style="left:1120.4px;top:466.2px;width:84.9px;height:20.8px;background:#f4cbae"></div>
<div class="a" style="left:1204.4px;top:466.2px;width:84.9px;height:20.8px;background:#f4cbae"></div>
<div class="a" style="left:1288.4px;top:466.2px;width:84.9px;height:20.8px;background:#ba5e26"></div>
<div class="a" style="left:1372.4px;top:466.2px;width:84.9px;height:20.8px;background:#ba5e26"></div>
<div class="a" style="left:1456.4px;top:466.2px;width:84.9px;height:20.8px;background:#f4cbae"></div>
<div class="a" style="left:1540.5px;top:466.2px;width:84.9px;height:20.8px;background:#f4cbae"></div>
<div class="a" style="left:1624.5px;top:466.2px;width:84.9px;height:20.8px;background:#f4cbae"></div>
<div class="a" style="left:1708.5px;top:466.2px;width:84.9px;height:20.8px;background:#afd096"></div>
<div class="a" style="left:28.1px;top:446.1px;width:84.9px;height:20.8px;background:#fbd974"></div>
<div class="xt" style="left:0;top:169.5px;width:29px;text-align:center;font-size:14px;color:#555">4</div>
<div class="xt" style="left:0;top:189.5px;width:29px;text-align:center;font-size:14px;color:#555">5</div>
<div class="xt" style="left:0;top:209.6px;width:29px;text-align:center;font-size:14px;color:#555">6</div>
<div class="xt" style="left:0;top:229.6px;width:29px;text-align:center;font-size:14px;color:#555">7</div>
<div class="xt" style="left:0;top:249.6px;width:29px;text-align:center;font-size:14px;color:#555">8</div>
<div class="xt" style="left:0;top:269.6px;width:29px;text-align:center;font-size:14px;color:#555">9</div>
<div class="xt" style="left:0;top:289.7px;width:29px;text-align:center;font-size:14px;color:#555">10</div>
<div class="xt" style="left:0;top:309.7px;width:29px;text-align:center;font-size:14px;color:#555">11</div>
<div class="xt" style="left:0;top:329.7px;width:29px;text-align:center;font-size:14px;color:#555">12</div>
<div class="xt" style="left:0;top:349.8px;width:29px;text-align:center;font-size:14px;color:#555">13</div>
<div class="xt" style="left:0;top:369.8px;width:29px;text-align:center;font-size:14px;color:#555">14</div>
<div class="xt" style="left:0;top:389.8px;width:29px;text-align:center;font-size:14px;color:#555">15</div>
<div class="xt" style="left:0;top:409.9px;width:29px;text-align:center;font-size:14px;color:#555">16</div>
<div class="xt" style="left:0;top:429.9px;width:29px;text-align:center;font-size:14px;color:#555">17</div>
<div class="xt" style="left:0;top:449.9px;width:29px;text-align:center;font-size:14px;color:#555">18</div>
<div class="xt" style="left:0;top:470.0px;width:29px;text-align:center;font-size:14px;color:#555">19</div>
<div class="xt" style="left:0;top:490.0px;width:29px;text-align:center;font-size:14px;color:#555">20</div>
<div class="xt" style="left:0;top:510.0px;width:29px;text-align:center;font-size:14px;color:#555">21</div>
<div class="xt" style="left:0;top:530.0px;width:29px;text-align:center;font-size:14px;color:#555">22</div>
<div class="xt" style="left:0;top:550.1px;width:29px;text-align:center;font-size:14px;color:#555">23</div>
<div class="xt" style="left:0;top:570.1px;width:29px;text-align:center;font-size:14px;color:#555">24</div>
<div class="xt" style="left:0;top:590.1px;width:29px;text-align:center;font-size:14px;color:#555">25</div>
<div class="xt" style="left:0;top:610.2px;width:29px;text-align:center;font-size:14px;color:#555">26</div>
<div class="xt" style="left:0;top:630.2px;width:29px;text-align:center;font-size:14px;color:#555">27</div>
<div class="xt" style="left:0;top:650.2px;width:29px;text-align:center;font-size:14px;color:#555">28</div>
<div class="xt" style="left:0;top:670.2px;width:29px;text-align:center;font-size:14px;color:#555">29</div>
<div class="xt" style="left:0;top:690.3px;width:29px;text-align:center;font-size:14px;color:#217346">30</div>
<div class="xt" style="left:0;top:710.3px;width:29px;text-align:center;font-size:14px;color:#555">31</div>
<div class="xt" style="left:0;top:730.3px;width:29px;text-align:center;font-size:14px;color:#555">32</div>
<div class="xt" style="left:0;top:750.4px;width:29px;text-align:center;font-size:14px;color:#555">33</div>
<div class="xt" style="left:0;top:770.4px;width:29px;text-align:center;font-size:14px;color:#555">34</div>
<div class="xt" style="left:0;top:790.4px;width:29px;text-align:center;font-size:14px;color:#555">35</div>
<div class="xt" style="left:0;top:810.5px;width:29px;text-align:center;font-size:14px;color:#555">36</div>
<div class="xt" style="left:0;top:830.5px;width:29px;text-align:center;font-size:14px;color:#555">37</div>
<div class="xt" style="left:0;top:850.5px;width:29px;text-align:center;font-size:14px;color:#555">38</div>
<div class="xt" style="left:0;top:870.6px;width:29px;text-align:center;font-size:14px;color:#555">39</div>
<div class="xt" style="left:32.5px;top:169.0px;width:80.0px;overflow:hidden;font-size:16px;letter-spacing:-0.3px;color:#111">N</div>
<div class="xt" style="left:113.0px;top:169.0px;width:81.4px;text-align:right;font-size:16px;color:#111;letter-spacing:-0.45px">228</div>
<div class="xt" style="left:197.0px;top:169.0px;width:81.4px;text-align:right;font-size:16px;color:#111;letter-spacing:-0.45px">225</div>
<div class="xt" style="left:281.1px;top:169.0px;width:81.4px;text-align:right;font-size:16px;color:#111;letter-spacing:-0.45px">227</div>
<div class="xt" style="left:365.1px;top:169.0px;width:81.4px;text-align:right;font-size:16px;color:#111;letter-spacing:-0.45px">226</div>
<div class="xt" style="left:449.1px;top:169.0px;width:81.4px;text-align:right;font-size:16px;color:#111;letter-spacing:-0.45px">229</div>
<div class="xt" style="left:533.1px;top:169.0px;width:81.4px;text-align:right;font-size:16px;color:#111;letter-spacing:-0.45px">226</div>
<div class="xt" style="left:617.1px;top:169.0px;width:81.4px;text-align:right;font-size:16px;color:#111;letter-spacing:-0.45px">227</div>
<div class="xt" style="left:701.2px;top:169.0px;width:81.4px;text-align:right;font-size:16px;color:#111;letter-spacing:-0.45px">226</div>
<div class="xt" style="left:785.2px;top:169.0px;width:81.4px;text-align:right;font-size:16px;color:#111;letter-spacing:-0.45px">227</div>
<div class="xt" style="left:869.2px;top:169.0px;width:81.4px;text-align:right;font-size:16px;color:#111;letter-spacing:-0.45px">227</div>
<div class="xt" style="left:953.2px;top:169.0px;width:81.4px;text-align:right;font-size:16px;color:#111;letter-spacing:-0.45px">228</div>
<div class="xt" style="left:1037.2px;top:169.0px;width:81.4px;text-align:right;font-size:16px;color:#111;letter-spacing:-0.45px">228</div>
<div class="xt" style="left:1121.3px;top:169.0px;width:81.4px;text-align:right;font-size:16px;color:#111;letter-spacing:-0.45px">227</div>
<div class="xt" style="left:1205.3px;top:169.0px;width:81.4px;text-align:right;font-size:16px;color:#111;letter-spacing:-0.45px">227</div>
<div class="xt" style="left:1289.3px;top:169.0px;width:81.4px;text-align:right;font-size:16px;color:#111;letter-spacing:-0.45px">227</div>
<div class="xt" style="left:1373.3px;top:169.0px;width:81.4px;text-align:right;font-size:16px;color:#111;letter-spacing:-0.45px">227</div>
<div class="xt" style="left:1457.3px;top:169.0px;width:81.4px;text-align:right;font-size:16px;color:#111;letter-spacing:-0.45px">227</div>
<div class="xt" style="left:1541.4px;top:169.0px;width:81.4px;text-align:right;font-size:16px;color:#111;letter-spacing:-0.45px">226</div>
<div class="xt" style="left:1625.4px;top:169.0px;width:81.4px;text-align:right;font-size:16px;color:#111;letter-spacing:-0.45px">226</div>
<div class="xt" style="left:1709.4px;top:169.0px;width:81.4px;text-align:right;font-size:16px;color:#111;letter-spacing:-0.45px">225</div>
<div class="xt" style="left:32.5px;top:189.0px;width:80.0px;overflow:hidden;font-size:16px;letter-spacing:-0.3px;color:#111">Missing</div>
<div class="xt" style="left:113.0px;top:189.0px;width:81.4px;text-align:right;font-size:16px;color:#111;letter-spacing:-0.45px">4</div>
<div class="xt" style="left:197.0px;top:189.0px;width:81.4px;text-align:right;font-size:16px;color:#111;letter-spacing:-0.45px">7</div>
<div class="xt" style="left:281.1px;top:189.0px;width:81.4px;text-align:right;font-size:16px;color:#111;letter-spacing:-0.45px">5</div>
<div class="xt" style="left:365.1px;top:189.0px;width:81.4px;text-align:right;font-size:16px;color:#111;letter-spacing:-0.45px">6</div>
<div class="xt" style="left:449.1px;top:189.0px;width:81.4px;text-align:right;font-size:16px;color:#111;letter-spacing:-0.45px">3</div>
<div class="xt" style="left:533.1px;top:189.0px;width:81.4px;text-align:right;font-size:16px;color:#111;letter-spacing:-0.45px">6</div>
<div class="xt" style="left:617.1px;top:189.0px;width:81.4px;text-align:right;font-size:16px;color:#111;letter-spacing:-0.45px">5</div>
<div class="xt" style="left:701.2px;top:189.0px;width:81.4px;text-align:right;font-size:16px;color:#111;letter-spacing:-0.45px">6</div>
<div class="xt" style="left:785.2px;top:189.0px;width:81.4px;text-align:right;font-size:16px;color:#111;letter-spacing:-0.45px">5</div>
<div class="xt" style="left:869.2px;top:189.0px;width:81.4px;text-align:right;font-size:16px;color:#111;letter-spacing:-0.45px">5</div>
<div class="xt" style="left:953.2px;top:189.0px;width:81.4px;text-align:right;font-size:16px;color:#111;letter-spacing:-0.45px">4</div>
<div class="xt" style="left:1037.2px;top:189.0px;width:81.4px;text-align:right;font-size:16px;color:#111;letter-spacing:-0.45px">4</div>
<div class="xt" style="left:1121.3px;top:189.0px;width:81.4px;text-align:right;font-size:16px;color:#111;letter-spacing:-0.45px">5</div>
<div class="xt" style="left:1205.3px;top:189.0px;width:81.4px;text-align:right;font-size:16px;color:#111;letter-spacing:-0.45px">5</div>
<div class="xt" style="left:1289.3px;top:189.0px;width:81.4px;text-align:right;font-size:16px;color:#111;letter-spacing:-0.45px">5</div>
<div class="xt" style="left:1373.3px;top:189.0px;width:81.4px;text-align:right;font-size:16px;color:#111;letter-spacing:-0.45px">5</div>
<div class="xt" style="left:1457.3px;top:189.0px;width:81.4px;text-align:right;font-size:16px;color:#111;letter-spacing:-0.45px">5</div>
<div class="xt" style="left:1541.4px;top:189.0px;width:81.4px;text-align:right;font-size:16px;color:#111;letter-spacing:-0.45px">6</div>
<div class="xt" style="left:1625.4px;top:189.0px;width:81.4px;text-align:right;font-size:16px;color:#111;letter-spacing:-0.45px">6</div>
<div class="xt" style="left:1709.4px;top:189.0px;width:81.4px;text-align:right;font-size:16px;color:#111;letter-spacing:-0.45px">7</div>
<div class="xt" style="left:32.5px;top:209.1px;width:80.0px;overflow:hidden;font-size:16px;letter-spacing:-0.3px;color:#111">Mean</div>
<div class="xt" style="left:113.0px;top:209.1px;width:81.4px;text-align:right;font-size:16px;color:#111;letter-spacing:-0.45px">1.09</div>
<div class="xt" style="left:197.0px;top:209.1px;width:81.4px;text-align:right;font-size:16px;color:#111;letter-spacing:-0.45px">1.32</div>
<div class="xt" style="left:281.1px;top:209.1px;width:81.4px;text-align:right;font-size:16px;color:#111;letter-spacing:-0.45px">3.34</div>
<div class="xt" style="left:365.1px;top:209.1px;width:81.4px;text-align:right;font-size:16px;color:#111;letter-spacing:-0.45px">0.491</div>
<div class="xt" style="left:449.1px;top:209.1px;width:81.4px;text-align:right;font-size:16px;color:#111;letter-spacing:-0.45px">5.07</div>
<div class="xt" style="left:533.1px;top:209.1px;width:81.4px;text-align:right;font-size:16px;color:#111;letter-spacing:-0.45px">1.01</div>
<div class="xt" style="left:617.1px;top:209.1px;width:81.4px;text-align:right;font-size:16px;color:#111;letter-spacing:-0.45px">0.308</div>
<div class="xt" style="left:701.2px;top:209.1px;width:81.4px;text-align:right;font-size:16px;color:#111;letter-spacing:-0.45px">4.5</div>
<div class="xt" style="left:785.2px;top:209.1px;width:81.4px;text-align:right;font-size:16px;color:#111;letter-spacing:-0.45px">0.515</div>
<div class="xt" style="left:869.2px;top:209.1px;width:81.4px;text-align:right;font-size:16px;color:#111;letter-spacing:-0.45px">0.899</div>
<div class="xt" style="left:953.2px;top:209.1px;width:81.4px;text-align:right;font-size:16px;color:#111;letter-spacing:-0.45px">3.94</div>
<div class="xt" style="left:1037.2px;top:209.1px;width:81.4px;text-align:right;font-size:16px;color:#111;letter-spacing:-0.45px">0.754</div>
<div class="xt" style="left:1121.3px;top:209.1px;width:81.4px;text-align:right;font-size:16px;color:#111;letter-spacing:-0.45px">0.238</div>
<div class="xt" style="left:1205.3px;top:209.1px;width:81.4px;text-align:right;font-size:16px;color:#111;letter-spacing:-0.45px">0.41</div>
<div class="xt" style="left:1289.3px;top:209.1px;width:81.4px;text-align:right;font-size:16px;color:#111;letter-spacing:-0.45px">0.132</div>
<div class="xt" style="left:1373.3px;top:209.1px;width:81.4px;text-align:right;font-size:16px;color:#111;letter-spacing:-0.45px">0.0969</div>
<div class="xt" style="left:1457.3px;top:209.1px;width:81.4px;text-align:right;font-size:16px;color:#111;letter-spacing:-0.45px">0.194</div>
<div class="xt" style="left:1541.4px;top:209.1px;width:81.4px;text-align:right;font-size:16px;color:#111;letter-spacing:-0.45px">0.15</div>
<div class="xt" style="left:1625.4px;top:209.1px;width:81.4px;text-align:right;font-size:16px;color:#111;letter-spacing:-0.45px">0.438</div>
<div class="xt" style="left:1709.4px;top:209.1px;width:81.4px;text-align:right;font-size:16px;color:#111;letter-spacing:-0.45px">0.609</div>
<div class="xt" style="left:32.5px;top:229.1px;width:80.0px;overflow:hidden;font-size:16px;letter-spacing:-0.3px;color:#111">Median</div>
<div class="xt" style="left:113.0px;top:229.1px;width:81.4px;text-align:right;font-size:16px;color:#111;letter-spacing:-0.45px">0</div>
<div class="xt" style="left:197.0px;top:229.1px;width:81.4px;text-align:right;font-size:16px;color:#111;letter-spacing:-0.45px">0</div>
<div class="xt" style="left:281.1px;top:229.1px;width:81.4px;text-align:right;font-size:16px;color:#111;letter-spacing:-0.45px">4</div>
<div class="xt" style="left:365.1px;top:229.1px;width:81.4px;text-align:right;font-size:16px;color:#111;letter-spacing:-0.45px">0</div>
<div class="xt" style="left:449.1px;top:229.1px;width:81.4px;text-align:right;font-size:16px;color:#111;letter-spacing:-0.45px">6</div>
<div class="xt" style="left:533.1px;top:229.1px;width:81.4px;text-align:right;font-size:16px;color:#111;letter-spacing:-0.45px">0</div>
<div class="xt" style="left:617.1px;top:229.1px;width:81.4px;text-align:right;font-size:16px;color:#111;letter-spacing:-0.45px">0</div>
<div class="xt" style="left:701.2px;top:229.1px;width:81.4px;text-align:right;font-size:16px;color:#111;letter-spacing:-0.45px">6</div>
<div class="xt" style="left:785.2px;top:229.1px;width:81.4px;text-align:right;font-size:16px;color:#111;letter-spacing:-0.45px">0</div>
<div class="xt" style="left:869.2px;top:229.1px;width:81.4px;text-align:right;font-size:16px;color:#111;letter-spacing:-0.45px">0</div>
<div class="xt" style="left:953.2px;top:229.1px;width:81.4px;text-align:right;font-size:16px;color:#111;letter-spacing:-0.45px">5</div>
<div class="xt" style="left:1037.2px;top:229.1px;width:81.4px;text-align:right;font-size:16px;color:#111;letter-spacing:-0.45px">0</div>
<div class="xt" style="left:1121.3px;top:229.1px;width:81.4px;text-align:right;font-size:16px;color:#111;letter-spacing:-0.45px">0</div>
<div class="xt" style="left:1205.3px;top:229.1px;width:81.4px;text-align:right;font-size:16px;color:#111;letter-spacing:-0.45px">0</div>
<div class="xt" style="left:1289.3px;top:229.1px;width:81.4px;text-align:right;font-size:16px;color:#111;letter-spacing:-0.45px">0</div>
<div class="xt" style="left:1373.3px;top:229.1px;width:81.4px;text-align:right;font-size:16px;color:#111;letter-spacing:-0.45px">0</div>
<div class="xt" style="left:1457.3px;top:229.1px;width:81.4px;text-align:right;font-size:16px;color:#111;letter-spacing:-0.45px">0</div>
<div class="xt" style="left:1541.4px;top:229.1px;width:81.4px;text-align:right;font-size:16px;color:#111;letter-spacing:-0.45px">0</div>
<div class="xt" style="left:1625.4px;top:229.1px;width:81.4px;text-align:right;font-size:16px;color:#111;letter-spacing:-0.45px">0</div>
<div class="xt" style="left:1709.4px;top:229.1px;width:81.4px;text-align:right;font-size:16px;color:#111;letter-spacing:-0.45px">0</div>
<div class="xt" style="left:32.5px;top:249.1px;width:80.0px;overflow:hidden;font-size:16px;letter-spacing:-0.3px;color:#111">Standard de</div>
<div class="xt" style="left:113.0px;top:249.1px;width:81.4px;text-align:right;font-size:16px;color:#111;letter-spacing:-0.45px">1.66</div>
<div class="xt" style="left:197.0px;top:249.1px;width:81.4px;text-align:right;font-size:16px;color:#111;letter-spacing:-0.45px">1.97</div>
<div class="xt" style="left:281.1px;top:249.1px;width:81.4px;text-align:right;font-size:16px;color:#111;letter-spacing:-0.45px">2.02</div>
<div class="xt" style="left:365.1px;top:249.1px;width:81.4px;text-align:right;font-size:16px;color:#111;letter-spacing:-0.45px">1.14</div>
<div class="xt" style="left:449.1px;top:249.1px;width:81.4px;text-align:right;font-size:16px;color:#111;letter-spacing:-0.45px">1.51</div>
<div class="xt" style="left:533.1px;top:249.1px;width:81.4px;text-align:right;font-size:16px;color:#111;letter-spacing:-0.45px">1.62</div>
<div class="xt" style="left:617.1px;top:249.1px;width:81.4px;text-align:right;font-size:16px;color:#111;letter-spacing:-0.45px">1.08</div>
<div class="xt" style="left:701.2px;top:249.1px;width:81.4px;text-align:right;font-size:16px;color:#111;letter-spacing:-0.45px">2.22</div>
<div class="xt" style="left:785.2px;top:249.1px;width:81.4px;text-align:right;font-size:16px;color:#111;letter-spacing:-0.45px">1.49</div>
<div class="xt" style="left:869.2px;top:249.1px;width:81.4px;text-align:right;font-size:16px;color:#111;letter-spacing:-0.45px">1.67</div>
<div class="xt" style="left:953.2px;top:249.1px;width:81.4px;text-align:right;font-size:16px;color:#111;letter-spacing:-0.45px">2.54</div>
<div class="xt" style="left:1037.2px;top:249.1px;width:81.4px;text-align:right;font-size:16px;color:#111;letter-spacing:-0.45px">1.68</div>
<div class="xt" style="left:1121.3px;top:249.1px;width:81.4px;text-align:right;font-size:16px;color:#111;letter-spacing:-0.45px">0.773</div>
<div class="xt" style="left:1205.3px;top:249.1px;width:81.4px;text-align:right;font-size:16px;color:#111;letter-spacing:-0.45px">1.19</div>
<div class="xt" style="left:1289.3px;top:249.1px;width:81.4px;text-align:right;font-size:16px;color:#111;letter-spacing:-0.45px">0.71</div>
<div class="xt" style="left:1373.3px;top:249.1px;width:81.4px;text-align:right;font-size:16px;color:#111;letter-spacing:-0.45px">0.548</div>
<div class="xt" style="left:1457.3px;top:249.1px;width:81.4px;text-align:right;font-size:16px;color:#111;letter-spacing:-0.45px">0.819</div>
<div class="xt" style="left:1541.4px;top:249.1px;width:81.4px;text-align:right;font-size:16px;color:#111;letter-spacing:-0.45px">0.689</div>
<div class="xt" style="left:1625.4px;top:249.1px;width:81.4px;text-align:right;font-size:16px;color:#111;letter-spacing:-0.45px">1.27</div>
<div class="xt" style="left:1709.4px;top:249.1px;width:81.4px;text-align:right;font-size:16px;color:#111;letter-spacing:-0.45px">1.4</div>
<div class="xt" style="left:32.5px;top:269.1px;width:80.0px;overflow:hidden;font-size:16px;letter-spacing:-0.3px;color:#111">Minimum</div>
<div class="xt" style="left:113.0px;top:269.1px;width:81.4px;text-align:right;font-size:16px;color:#111;letter-spacing:-0.45px">0</div>
<div class="xt" style="left:197.0px;top:269.1px;width:81.4px;text-align:right;font-size:16px;color:#111;letter-spacing:-0.45px">0</div>
<div class="xt" style="left:281.1px;top:269.1px;width:81.4px;text-align:right;font-size:16px;color:#111;letter-spacing:-0.45px">0</div>
<div class="xt" style="left:365.1px;top:269.1px;width:81.4px;text-align:right;font-size:16px;color:#111;letter-spacing:-0.45px">0</div>
<div class="xt" style="left:449.1px;top:269.1px;width:81.4px;text-align:right;font-size:16px;color:#111;letter-spacing:-0.45px">0</div>
<div class="xt" style="left:533.1px;top:269.1px;width:81.4px;text-align:right;font-size:16px;color:#111;letter-spacing:-0.45px">0</div>
<div class="xt" style="left:617.1px;top:269.1px;width:81.4px;text-align:right;font-size:16px;color:#111;letter-spacing:-0.45px">0</div>
<div class="xt" style="left:701.2px;top:269.1px;width:81.4px;text-align:right;font-size:16px;color:#111;letter-spacing:-0.45px">0</div>
<div class="xt" style="left:785.2px;top:269.1px;width:81.4px;text-align:right;font-size:16px;color:#111;letter-spacing:-0.45px">0</div>
<div class="xt" style="left:869.2px;top:269.1px;width:81.4px;text-align:right;font-size:16px;color:#111;letter-spacing:-0.45px">0</div>
<div class="xt" style="left:953.2px;top:269.1px;width:81.4px;text-align:right;font-size:16px;color:#111;letter-spacing:-0.45px">0</div>
<div class="xt" style="left:1037.2px;top:269.1px;width:81.4px;text-align:right;font-size:16px;color:#111;letter-spacing:-0.45px">0</div>
<div class="xt" style="left:1121.3px;top:269.1px;width:81.4px;text-align:right;font-size:16px;color:#111;letter-spacing:-0.45px">0</div>
<div class="xt" style="left:1205.3px;top:269.1px;width:81.4px;text-align:right;font-size:16px;color:#111;letter-spacing:-0.45px">0</div>
<div class="xt" style="left:1289.3px;top:269.1px;width:81.4px;text-align:right;font-size:16px;color:#111;letter-spacing:-0.45px">0</div>
<div class="xt" style="left:1373.3px;top:269.1px;width:81.4px;text-align:right;font-size:16px;color:#111;letter-spacing:-0.45px">0</div>
<div class="xt" style="left:1457.3px;top:269.1px;width:81.4px;text-align:right;font-size:16px;color:#111;letter-spacing:-0.45px">0</div>
<div class="xt" style="left:1541.4px;top:269.1px;width:81.4px;text-align:right;font-size:16px;color:#111;letter-spacing:-0.45px">0</div>
<div class="xt" style="left:1625.4px;top:269.1px;width:81.4px;text-align:right;font-size:16px;color:#111;letter-spacing:-0.45px">0</div>
<div class="xt" style="left:1709.4px;top:269.1px;width:81.4px;text-align:right;font-size:16px;color:#111;letter-spacing:-0.45px">0</div>
<div class="xt" style="left:32.5px;top:289.2px;width:80.0px;overflow:hidden;font-size:16px;letter-spacing:-0.3px;color:#111">Maximum</div>
<div class="xt" style="left:113.0px;top:289.2px;width:81.4px;text-align:right;font-size:16px;color:#111;letter-spacing:-0.45px">6</div>
<div class="xt" style="left:197.0px;top:289.2px;width:81.4px;text-align:right;font-size:16px;color:#111;letter-spacing:-0.45px">6</div>
<div class="xt" style="left:281.1px;top:289.2px;width:81.4px;text-align:right;font-size:16px;color:#111;letter-spacing:-0.45px">6</div>
<div class="xt" style="left:365.1px;top:289.2px;width:81.4px;text-align:right;font-size:16px;color:#111;letter-spacing:-0.45px">6</div>
<div class="xt" style="left:449.1px;top:289.2px;width:81.4px;text-align:right;font-size:16px;color:#111;letter-spacing:-0.45px">6</div>
<div class="xt" style="left:533.1px;top:289.2px;width:81.4px;text-align:right;font-size:16px;color:#111;letter-spacing:-0.45px">6</div>
<div class="xt" style="left:617.1px;top:289.2px;width:81.4px;text-align:right;font-size:16px;color:#111;letter-spacing:-0.45px">6</div>
<div class="xt" style="left:701.2px;top:289.2px;width:81.4px;text-align:right;font-size:16px;color:#111;letter-spacing:-0.45px">6</div>
<div class="xt" style="left:785.2px;top:289.2px;width:81.4px;text-align:right;font-size:16px;color:#111;letter-spacing:-0.45px">6</div>
<div class="xt" style="left:869.2px;top:289.2px;width:81.4px;text-align:right;font-size:16px;color:#111;letter-spacing:-0.45px">6</div>
<div class="xt" style="left:953.2px;top:289.2px;width:81.4px;text-align:right;font-size:16px;color:#111;letter-spacing:-0.45px">6</div>
<div class="xt" style="left:1037.2px;top:289.2px;width:81.4px;text-align:right;font-size:16px;color:#111;letter-spacing:-0.45px">6</div>
<div class="xt" style="left:1121.3px;top:289.2px;width:81.4px;text-align:right;font-size:16px;color:#111;letter-spacing:-0.45px">5</div>
<div class="xt" style="left:1205.3px;top:289.2px;width:81.4px;text-align:right;font-size:16px;color:#111;letter-spacing:-0.45px">6</div>
<div class="xt" style="left:1289.3px;top:289.2px;width:81.4px;text-align:right;font-size:16px;color:#111;letter-spacing:-0.45px">5</div>
<div class="xt" style="left:1373.3px;top:289.2px;width:81.4px;text-align:right;font-size:16px;color:#111;letter-spacing:-0.45px">5</div>
<div class="xt" style="left:1457.3px;top:289.2px;width:81.4px;text-align:right;font-size:16px;color:#111;letter-spacing:-0.45px">6</div>
<div class="xt" style="left:1541.4px;top:289.2px;width:81.4px;text-align:right;font-size:16px;color:#111;letter-spacing:-0.45px">5</div>
<div class="xt" style="left:1625.4px;top:289.2px;width:81.4px;text-align:right;font-size:16px;color:#111;letter-spacing:-0.45px">6</div>
<div class="xt" style="left:1709.4px;top:289.2px;width:81.4px;text-align:right;font-size:16px;color:#111;letter-spacing:-0.45px">6</div>
<div class="xt" style="left:32.5px;top:429.4px;width:80.0px;overflow:hidden;font-size:16px;letter-spacing:-0.3px;color:#111">N</div>
<div class="xt" style="left:113.0px;top:429.4px;width:81.4px;text-align:right;font-size:16px;color:#111;letter-spacing:-0.45px">219</div>
<div class="xt" style="left:197.0px;top:429.4px;width:81.4px;text-align:right;font-size:16px;color:#111;letter-spacing:-0.45px">218</div>
<div class="xt" style="left:281.1px;top:429.4px;width:81.4px;text-align:right;font-size:16px;color:#111;letter-spacing:-0.45px">219</div>
<div class="xt" style="left:365.1px;top:429.4px;width:81.4px;text-align:right;font-size:16px;color:#111;letter-spacing:-0.45px">220</div>
<div class="xt" style="left:449.1px;top:429.4px;width:81.4px;text-align:right;font-size:16px;color:#111;letter-spacing:-0.45px">221</div>
<div class="xt" style="left:533.1px;top:429.4px;width:81.4px;text-align:right;font-size:16px;color:#111;letter-spacing:-0.45px">219</div>
<div class="xt" style="left:617.1px;top:429.4px;width:81.4px;text-align:right;font-size:16px;color:#111;letter-spacing:-0.45px">217</div>
<div class="xt" style="left:701.2px;top:429.4px;width:81.4px;text-align:right;font-size:16px;color:#111;letter-spacing:-0.45px">222</div>
<div class="xt" style="left:785.2px;top:429.4px;width:81.4px;text-align:right;font-size:16px;color:#111;letter-spacing:-0.45px">218</div>
<div class="xt" style="left:869.2px;top:429.4px;width:81.4px;text-align:right;font-size:16px;color:#111;letter-spacing:-0.45px">219</div>
<div class="xt" style="left:953.2px;top:429.4px;width:81.4px;text-align:right;font-size:16px;color:#111;letter-spacing:-0.45px">220</div>
<div class="xt" style="left:1037.2px;top:429.4px;width:81.4px;text-align:right;font-size:16px;color:#111;letter-spacing:-0.45px">218</div>
<div class="xt" style="left:1121.3px;top:429.4px;width:81.4px;text-align:right;font-size:16px;color:#111;letter-spacing:-0.45px">218</div>
<div class="xt" style="left:1205.3px;top:429.4px;width:81.4px;text-align:right;font-size:16px;color:#111;letter-spacing:-0.45px">218</div>
<div class="xt" style="left:1289.3px;top:429.4px;width:81.4px;text-align:right;font-size:16px;color:#111;letter-spacing:-0.45px">218</div>
<div class="xt" style="left:1373.3px;top:429.4px;width:81.4px;text-align:right;font-size:16px;color:#111;letter-spacing:-0.45px">216</div>
<div class="xt" style="left:1457.3px;top:429.4px;width:81.4px;text-align:right;font-size:16px;color:#111;letter-spacing:-0.45px">218</div>
<div class="xt" style="left:1541.4px;top:429.4px;width:81.4px;text-align:right;font-size:16px;color:#111;letter-spacing:-0.45px">218</div>
<div class="xt" style="left:1625.4px;top:429.4px;width:81.4px;text-align:right;font-size:16px;color:#111;letter-spacing:-0.45px">218</div>
<div class="xt" style="left:1709.4px;top:429.4px;width:81.4px;text-align:right;font-size:16px;color:#111;letter-spacing:-0.45px">218</div>
<div class="xt" style="left:32.5px;top:449.4px;width:80.0px;overflow:hidden;font-size:16px;letter-spacing:-0.3px;color:#111">Missing</div>
<div class="xt" style="left:113.0px;top:449.4px;width:81.4px;text-align:right;font-size:16px;color:#111;letter-spacing:-0.45px">13</div>
<div class="xt" style="left:197.0px;top:449.4px;width:81.4px;text-align:right;font-size:16px;color:#111;letter-spacing:-0.45px">14</div>
<div class="xt" style="left:281.1px;top:449.4px;width:81.4px;text-align:right;font-size:16px;color:#111;letter-spacing:-0.45px">13</div>
<div class="xt" style="left:365.1px;top:449.4px;width:81.4px;text-align:right;font-size:16px;color:#111;letter-spacing:-0.45px">12</div>
<div class="xt" style="left:449.1px;top:449.4px;width:81.4px;text-align:right;font-size:16px;color:#111;letter-spacing:-0.45px">11</div>
<div class="xt" style="left:533.1px;top:449.4px;width:81.4px;text-align:right;font-size:16px;color:#111;letter-spacing:-0.45px">13</div>
<div class="xt" style="left:617.1px;top:449.4px;width:81.4px;text-align:right;font-size:16px;color:#111;letter-spacing:-0.45px">15</div>
<div class="xt" style="left:701.2px;top:449.4px;width:81.4px;text-align:right;font-size:16px;color:#111;letter-spacing:-0.45px">10</div>
<div class="xt" style="left:785.2px;top:449.4px;width:81.4px;text-align:right;font-size:16px;color:#111;letter-spacing:-0.45px">14</div>
<div class="xt" style="left:869.2px;top:449.4px;width:81.4px;text-align:right;font-size:16px;color:#111;letter-spacing:-0.45px">13</div>
<div class="xt" style="left:953.2px;top:449.4px;width:81.4px;text-align:right;font-size:16px;color:#111;letter-spacing:-0.45px">12</div>
<div class="xt" style="left:1037.2px;top:449.4px;width:81.4px;text-align:right;font-size:16px;color:#111;letter-spacing:-0.45px">14</div>
<div class="xt" style="left:1121.3px;top:449.4px;width:81.4px;text-align:right;font-size:16px;color:#111;letter-spacing:-0.45px">14</div>
<div class="xt" style="left:1205.3px;top:449.4px;width:81.4px;text-align:right;font-size:16px;color:#111;letter-spacing:-0.45px">14</div>
<div class="xt" style="left:1289.3px;top:449.4px;width:81.4px;text-align:right;font-size:16px;color:#111;letter-spacing:-0.45px">14</div>
<div class="xt" style="left:1373.3px;top:449.4px;width:81.4px;text-align:right;font-size:16px;color:#111;letter-spacing:-0.45px">16</div>
<div class="xt" style="left:1457.3px;top:449.4px;width:81.4px;text-align:right;font-size:16px;color:#111;letter-spacing:-0.45px">14</div>
<div class="xt" style="left:1541.4px;top:449.4px;width:81.4px;text-align:right;font-size:16px;color:#111;letter-spacing:-0.45px">14</div>
<div class="xt" style="left:1625.4px;top:449.4px;width:81.4px;text-align:right;font-size:16px;color:#111;letter-spacing:-0.45px">14</div>
<div class="xt" style="left:1709.4px;top:449.4px;width:81.4px;text-align:right;font-size:16px;color:#111;letter-spacing:-0.45px">14</div>
<div class="xt" style="left:32.5px;top:469.5px;width:80.0px;overflow:hidden;font-size:16px;letter-spacing:-0.3px;color:#111">Mean</div>
<div class="xt" style="left:113.0px;top:469.5px;width:81.4px;text-align:right;font-size:16px;color:#111;letter-spacing:-0.45px">0.941</div>
<div class="xt" style="left:197.0px;top:469.5px;width:81.4px;text-align:right;font-size:16px;color:#111;letter-spacing:-0.45px">1.17</div>
<div class="xt" style="left:281.1px;top:469.5px;width:81.4px;text-align:right;font-size:16px;color:#111;letter-spacing:-0.45px">2.92</div>
<div class="xt" style="left:365.1px;top:469.5px;width:81.4px;text-align:right;font-size:16px;color:#111;letter-spacing:-0.45px">0.832</div>
<div class="xt" style="left:449.1px;top:469.5px;width:81.4px;text-align:right;font-size:16px;color:#111;letter-spacing:-0.45px">4.79</div>
<div class="xt" style="left:533.1px;top:469.5px;width:81.4px;text-align:right;font-size:16px;color:#111;letter-spacing:-0.45px">0.822</div>
<div class="xt" style="left:617.1px;top:469.5px;width:81.4px;text-align:right;font-size:16px;color:#111;letter-spacing:-0.45px">0.184</div>
<div class="xt" style="left:701.2px;top:469.5px;width:81.4px;text-align:right;font-size:16px;color:#111;letter-spacing:-0.45px">4.36</div>
<div class="xt" style="left:785.2px;top:469.5px;width:81.4px;text-align:right;font-size:16px;color:#111;letter-spacing:-0.45px">0.422</div>
<div class="xt" style="left:869.2px;top:469.5px;width:81.4px;text-align:right;font-size:16px;color:#111;letter-spacing:-0.45px">0.603</div>
<div class="xt" style="left:953.2px;top:469.5px;width:81.4px;text-align:right;font-size:16px;color:#111;letter-spacing:-0.45px">3.57</div>
<div class="xt" style="left:1037.2px;top:469.5px;width:81.4px;text-align:right;font-size:16px;color:#111;letter-spacing:-0.45px">0.477</div>
<div class="xt" style="left:1121.3px;top:469.5px;width:81.4px;text-align:right;font-size:16px;color:#111;letter-spacing:-0.45px">0.165</div>
<div class="xt" style="left:1205.3px;top:469.5px;width:81.4px;text-align:right;font-size:16px;color:#111;letter-spacing:-0.45px">0.339</div>
<div class="xt" style="left:1289.3px;top:469.5px;width:81.4px;text-align:right;font-size:16px;color:#111;letter-spacing:-0.45px">0.078</div>
<div class="xt" style="left:1373.3px;top:469.5px;width:81.4px;text-align:right;font-size:16px;color:#111;letter-spacing:-0.45px">0.0556</div>
<div class="xt" style="left:1457.3px;top:469.5px;width:81.4px;text-align:right;font-size:16px;color:#111;letter-spacing:-0.45px">0.156</div>
<div class="xt" style="left:1541.4px;top:469.5px;width:81.4px;text-align:right;font-size:16px;color:#111;letter-spacing:-0.45px">0.156</div>
<div class="xt" style="left:1625.4px;top:469.5px;width:81.4px;text-align:right;font-size:16px;color:#111;letter-spacing:-0.45px">0.211</div>
<div class="xt" style="left:1709.4px;top:469.5px;width:81.4px;text-align:right;font-size:16px;color:#111;letter-spacing:-0.45px">0.546</div>
<div class="xt" style="left:32.5px;top:489.5px;width:80.0px;overflow:hidden;font-size:16px;letter-spacing:-0.3px;color:#111">Median</div>
<div class="xt" style="left:113.0px;top:489.5px;width:81.4px;text-align:right;font-size:16px;color:#111;letter-spacing:-0.45px">0</div>
<div class="xt" style="left:197.0px;top:489.5px;width:81.4px;text-align:right;font-size:16px;color:#111;letter-spacing:-0.45px">0</div>
<div class="xt" style="left:281.1px;top:489.5px;width:81.4px;text-align:right;font-size:16px;color:#111;letter-spacing:-0.45px">3</div>
<div class="xt" style="left:365.1px;top:489.5px;width:81.4px;text-align:right;font-size:16px;color:#111;letter-spacing:-0.45px">0</div>
<div class="xt" style="left:449.1px;top:489.5px;width:81.4px;text-align:right;font-size:16px;color:#111;letter-spacing:-0.45px">5</div>
<div class="xt" style="left:533.1px;top:489.5px;width:81.4px;text-align:right;font-size:16px;color:#111;letter-spacing:-0.45px">0</div>
<div class="xt" style="left:617.1px;top:489.5px;width:81.4px;text-align:right;font-size:16px;color:#111;letter-spacing:-0.45px">0</div>
<div class="xt" style="left:701.2px;top:489.5px;width:81.4px;text-align:right;font-size:16px;color:#111;letter-spacing:-0.45px">5</div>
<div class="xt" style="left:785.2px;top:489.5px;width:81.4px;text-align:right;font-size:16px;color:#111;letter-spacing:-0.45px">0</div>
<div class="xt" style="left:869.2px;top:489.5px;width:81.4px;text-align:right;font-size:16px;color:#111;letter-spacing:-0.45px">0</div>
<div class="xt" style="left:953.2px;top:489.5px;width:81.4px;text-align:right;font-size:16px;color:#111;letter-spacing:-0.45px">5</div>
<div class="xt" style="left:1037.2px;top:489.5px;width:81.4px;text-align:right;font-size:16px;color:#111;letter-spacing:-0.45px">0</div>
<div class="xt" style="left:1121.3px;top:489.5px;width:81.4px;text-align:right;font-size:16px;color:#111;letter-spacing:-0.45px">0</div>
<div class="xt" style="left:1205.3px;top:489.5px;width:81.4px;text-align:right;font-size:16px;color:#111;letter-spacing:-0.45px">0</div>
<div class="xt" style="left:1289.3px;top:489.5px;width:81.4px;text-align:right;font-size:16px;color:#111;letter-spacing:-0.45px">0</div>
<div class="xt" style="left:1373.3px;top:489.5px;width:81.4px;text-align:right;font-size:16px;color:#111;letter-spacing:-0.45px">0</div>
<div class="xt" style="left:1457.3px;top:489.5px;width:81.4px;text-align:right;font-size:16px;color:#111;letter-spacing:-0.45px">0</div>
<div class="xt" style="left:1541.4px;top:489.5px;width:81.4px;text-align:right;font-size:16px;color:#111;letter-spacing:-0.45px">0</div>
<div class="xt" style="left:1625.4px;top:489.5px;width:81.4px;text-align:right;font-size:16px;color:#111;letter-spacing:-0.45px">0</div>
<div class="xt" style="left:1709.4px;top:489.5px;width:81.4px;text-align:right;font-size:16px;color:#111;letter-spacing:-0.45px">0</div>
<div class="xt" style="left:32.5px;top:509.5px;width:80.0px;overflow:hidden;font-size:16px;letter-spacing:-0.3px;color:#111">Standard de</div>
<div class="xt" style="left:113.0px;top:509.5px;width:81.4px;text-align:right;font-size:16px;color:#111;letter-spacing:-0.45px">1.59</div>
<div class="xt" style="left:197.0px;top:509.5px;width:81.4px;text-align:right;font-size:16px;color:#111;letter-spacing:-0.45px">1.85</div>
<div class="xt" style="left:281.1px;top:509.5px;width:81.4px;text-align:right;font-size:16px;color:#111;letter-spacing:-0.45px">2.02</div>
<div class="xt" style="left:365.1px;top:509.5px;width:81.4px;text-align:right;font-size:16px;color:#111;letter-spacing:-0.45px">1.44</div>
<div class="xt" style="left:449.1px;top:509.5px;width:81.4px;text-align:right;font-size:16px;color:#111;letter-spacing:-0.45px">1.65</div>
<div class="xt" style="left:533.1px;top:509.5px;width:81.4px;text-align:right;font-size:16px;color:#111;letter-spacing:-0.45px">1.45</div>
<div class="xt" style="left:617.1px;top:509.5px;width:81.4px;text-align:right;font-size:16px;color:#111;letter-spacing:-0.45px">0.83</div>
<div class="xt" style="left:701.2px;top:509.5px;width:81.4px;text-align:right;font-size:16px;color:#111;letter-spacing:-0.45px">2.17</div>
<div class="xt" style="left:785.2px;top:509.5px;width:81.4px;text-align:right;font-size:16px;color:#111;letter-spacing:-0.45px">1.42</div>
<div class="xt" style="left:869.2px;top:509.5px;width:81.4px;text-align:right;font-size:16px;color:#111;letter-spacing:-0.45px">1.32</div>
<div class="xt" style="left:953.2px;top:509.5px;width:81.4px;text-align:right;font-size:16px;color:#111;letter-spacing:-0.45px">2.48</div>
<div class="xt" style="left:1037.2px;top:509.5px;width:81.4px;text-align:right;font-size:16px;color:#111;letter-spacing:-0.45px">1.27</div>
<div class="xt" style="left:1121.3px;top:509.5px;width:81.4px;text-align:right;font-size:16px;color:#111;letter-spacing:-0.45px">0.644</div>
<div class="xt" style="left:1205.3px;top:509.5px;width:81.4px;text-align:right;font-size:16px;color:#111;letter-spacing:-0.45px">1.07</div>
<div class="xt" style="left:1289.3px;top:509.5px;width:81.4px;text-align:right;font-size:16px;color:#111;letter-spacing:-0.45px">0.567</div>
<div class="xt" style="left:1373.3px;top:509.5px;width:81.4px;text-align:right;font-size:16px;color:#111;letter-spacing:-0.45px">0.459</div>
<div class="xt" style="left:1457.3px;top:509.5px;width:81.4px;text-align:right;font-size:16px;color:#111;letter-spacing:-0.45px">0.764</div>
<div class="xt" style="left:1541.4px;top:509.5px;width:81.4px;text-align:right;font-size:16px;color:#111;letter-spacing:-0.45px">0.695</div>
<div class="xt" style="left:1625.4px;top:509.5px;width:81.4px;text-align:right;font-size:16px;color:#111;letter-spacing:-0.45px">0.859</div>
<div class="xt" style="left:1709.4px;top:509.5px;width:81.4px;text-align:right;font-size:16px;color:#111;letter-spacing:-0.45px">1.34</div>
<div class="xt" style="left:32.5px;top:529.5px;width:80.0px;overflow:hidden;font-size:16px;letter-spacing:-0.3px;color:#111">Minimum</div>
<div class="xt" style="left:113.0px;top:529.5px;width:81.4px;text-align:right;font-size:16px;color:#111;letter-spacing:-0.45px">0</div>
<div class="xt" style="left:197.0px;top:529.5px;width:81.4px;text-align:right;font-size:16px;color:#111;letter-spacing:-0.45px">0</div>
<div class="xt" style="left:281.1px;top:529.5px;width:81.4px;text-align:right;font-size:16px;color:#111;letter-spacing:-0.45px">0</div>
<div class="xt" style="left:365.1px;top:529.5px;width:81.4px;text-align:right;font-size:16px;color:#111;letter-spacing:-0.45px">0</div>
<div class="xt" style="left:449.1px;top:529.5px;width:81.4px;text-align:right;font-size:16px;color:#111;letter-spacing:-0.45px">0</div>
<div class="xt" style="left:533.1px;top:529.5px;width:81.4px;text-align:right;font-size:16px;color:#111;letter-spacing:-0.45px">0</div>
<div class="xt" style="left:617.1px;top:529.5px;width:81.4px;text-align:right;font-size:16px;color:#111;letter-spacing:-0.45px">0</div>
<div class="xt" style="left:701.2px;top:529.5px;width:81.4px;text-align:right;font-size:16px;color:#111;letter-spacing:-0.45px">0</div>
<div class="xt" style="left:785.2px;top:529.5px;width:81.4px;text-align:right;font-size:16px;color:#111;letter-spacing:-0.45px">0</div>
<div class="xt" style="left:869.2px;top:529.5px;width:81.4px;text-align:right;font-size:16px;color:#111;letter-spacing:-0.45px">0</div>
<div class="xt" style="left:953.2px;top:529.5px;width:81.4px;text-align:right;font-size:16px;color:#111;letter-spacing:-0.45px">0</div>
<div class="xt" style="left:1037.2px;top:529.5px;width:81.4px;text-align:right;font-size:16px;color:#111;letter-spacing:-0.45px">0</div>
<div class="xt" style="left:1121.3px;top:529.5px;width:81.4px;text-align:right;font-size:16px;color:#111;letter-spacing:-0.45px">0</div>
<div class="xt" style="left:1205.3px;top:529.5px;width:81.4px;text-align:right;font-size:16px;color:#111;letter-spacing:-0.45px">0</div>
<div class="xt" style="left:1289.3px;top:529.5px;width:81.4px;text-align:right;font-size:16px;color:#111;letter-spacing:-0.45px">0</div>
<div class="xt" style="left:1373.3px;top:529.5px;width:81.4px;text-align:right;font-size:16px;color:#111;letter-spacing:-0.45px">0</div>
<div class="xt" style="left:1457.3px;top:529.5px;width:81.4px;text-align:right;font-size:16px;color:#111;letter-spacing:-0.45px">0</div>
<div class="xt" style="left:1541.4px;top:529.5px;width:81.4px;text-align:right;font-size:16px;color:#111;letter-spacing:-0.45px">0</div>
<div class="xt" style="left:1625.4px;top:529.5px;width:81.4px;text-align:right;font-size:16px;color:#111;letter-spacing:-0.45px">0</div>
<div class="xt" style="left:1709.4px;top:529.5px;width:81.4px;text-align:right;font-size:16px;color:#111;letter-spacing:-0.45px">0</div>
<div class="xt" style="left:32.5px;top:549.6px;width:80.0px;overflow:hidden;font-size:16px;letter-spacing:-0.3px;color:#111">Maximum</div>
<div class="xt" style="left:113.0px;top:549.6px;width:81.4px;text-align:right;font-size:16px;color:#111;letter-spacing:-0.45px">6</div>
<div class="xt" style="left:197.0px;top:549.6px;width:81.4px;text-align:right;font-size:16px;color:#111;letter-spacing:-0.45px">6</div>
<div class="xt" style="left:281.1px;top:549.6px;width:81.4px;text-align:right;font-size:16px;color:#111;letter-spacing:-0.45px">6</div>
<div class="xt" style="left:365.1px;top:549.6px;width:81.4px;text-align:right;font-size:16px;color:#111;letter-spacing:-0.45px">6</div>
<div class="xt" style="left:449.1px;top:549.6px;width:81.4px;text-align:right;font-size:16px;color:#111;letter-spacing:-0.45px">6</div>
<div class="xt" style="left:533.1px;top:549.6px;width:81.4px;text-align:right;font-size:16px;color:#111;letter-spacing:-0.45px">6</div>
<div class="xt" style="left:617.1px;top:549.6px;width:81.4px;text-align:right;font-size:16px;color:#111;letter-spacing:-0.45px">6</div>
<div class="xt" style="left:701.2px;top:549.6px;width:81.4px;text-align:right;font-size:16px;color:#111;letter-spacing:-0.45px">6</div>
<div class="xt" style="left:785.2px;top:549.6px;width:81.4px;text-align:right;font-size:16px;color:#111;letter-spacing:-0.45px">6</div>
<div class="xt" style="left:869.2px;top:549.6px;width:81.4px;text-align:right;font-size:16px;color:#111;letter-spacing:-0.45px">6</div>
<div class="xt" style="left:953.2px;top:549.6px;width:81.4px;text-align:right;font-size:16px;color:#111;letter-spacing:-0.45px">6</div>
<div class="xt" style="left:1037.2px;top:549.6px;width:81.4px;text-align:right;font-size:16px;color:#111;letter-spacing:-0.45px">6</div>
<div class="xt" style="left:1121.3px;top:549.6px;width:81.4px;text-align:right;font-size:16px;color:#111;letter-spacing:-0.45px">5</div>
<div class="xt" style="left:1205.3px;top:549.6px;width:81.4px;text-align:right;font-size:16px;color:#111;letter-spacing:-0.45px">6</div>
<div class="xt" style="left:1289.3px;top:549.6px;width:81.4px;text-align:right;font-size:16px;color:#111;letter-spacing:-0.45px">5</div>
<div class="xt" style="left:1373.3px;top:549.6px;width:81.4px;text-align:right;font-size:16px;color:#111;letter-spacing:-0.45px">5</div>
<div class="xt" style="left:1457.3px;top:549.6px;width:81.4px;text-align:right;font-size:16px;color:#111;letter-spacing:-0.45px">6</div>
<div class="xt" style="left:1541.4px;top:549.6px;width:81.4px;text-align:right;font-size:16px;color:#111;letter-spacing:-0.45px">5</div>
<div class="xt" style="left:1625.4px;top:549.6px;width:81.4px;text-align:right;font-size:16px;color:#111;letter-spacing:-0.45px">6</div>
<div class="xt" style="left:1709.4px;top:549.6px;width:81.4px;text-align:right;font-size:16px;color:#111;letter-spacing:-0.45px">6</div>
<div class="xt" style="left:32.5px;top:329.2px;font-size:16px;color:#111">Time Stamp 2</div>
<div class="xt" style="left:32.5px;top:369.3px;font-size:16px;color:#111">Descriptives</div>
<div class="xt" style="left:115.5px;top:408.9px;width:81.5px;overflow:hidden;font-size:15.6px;font-weight:bold;color:#1a1a1a">facebook2</div>
<div class="xt" style="left:199.5px;top:408.9px;width:81.5px;overflow:hidden;font-size:15.6px;font-weight:bold;color:#1a1a1a">twitter2</div>
<div class="xt" style="left:283.6px;top:408.9px;width:81.5px;overflow:hidden;font-size:15.6px;font-weight:bold;color:#1a1a1a">youtube2</div>
<div class="xt" style="left:367.6px;top:408.9px;width:81.5px;overflow:hidden;font-size:15.6px;font-weight:bold;color:#1a1a1a">linkedin2</div>
<div class="xt" style="left:451.6px;top:408.9px;width:81.5px;overflow:hidden;font-size:15.6px;font-weight:bold;color:#1a1a1a">instagram2</div>
<div class="xt" style="left:535.6px;top:408.9px;width:81.5px;overflow:hidden;font-size:15.6px;font-weight:bold;color:#1a1a1a">pinterest2</div>
<div class="xt" style="left:619.6px;top:408.9px;width:81.5px;overflow:hidden;font-size:15.6px;font-weight:bold;color:#1a1a1a">tumbler2</div>
<div class="xt" style="left:703.7px;top:408.9px;width:81.5px;overflow:hidden;font-size:15.6px;font-weight:bold;color:#1a1a1a">snapchat2</div>
<div class="xt" style="left:787.7px;top:408.9px;width:81.5px;overflow:hidden;font-size:15.6px;font-weight:bold;color:#1a1a1a">wechat2</div>
<div class="xt" style="left:871.7px;top:408.9px;width:81.5px;overflow:hidden;font-size:15.6px;font-weight:bold;color:#1a1a1a">reddit2</div>
<div class="xt" style="left:955.7px;top:408.9px;width:81.5px;overflow:hidden;font-size:15.6px;font-weight:bold;color:#1a1a1a">tiktok2</div>
<div class="xt" style="left:1039.7px;top:408.9px;width:81.5px;overflow:hidden;font-size:15.6px;font-weight:bold;color:#1a1a1a">discord2</div>
<div class="xt" style="left:1123.8px;top:408.9px;width:81.5px;overflow:hidden;font-size:15.6px;font-weight:bold;color:#1a1a1a">quora2</div>
<div class="xt" style="left:1207.8px;top:408.9px;width:81.5px;overflow:hidden;font-size:15.6px;font-weight:bold;color:#1a1a1a">tinder2</div>
<div class="xt" style="left:1291.8px;top:408.9px;width:81.5px;overflow:hidden;font-size:15.6px;font-weight:bold;color:#1a1a1a">grinder2</div>
<div class="xt" style="left:1375.8px;top:408.9px;width:81.5px;overflow:hidden;font-size:15.6px;font-weight:bold;color:#1a1a1a">scissr2</div>
<div class="xt" style="left:1459.8px;top:408.9px;width:81.5px;overflow:hidden;font-size:15.6px;font-weight:bold;color:#1a1a1a">bumble2</div>
<div class="xt" style="left:1543.9px;top:408.9px;width:81.5px;overflow:hidden;font-size:15.6px;font-weight:bold;color:#1a1a1a">hinge2</div>
<div class="xt" style="left:1627.9px;top:408.9px;width:81.5px;overflow:hidden;font-size:15.6px;font-weight:bold;color:#1a1a1a">twitch2</div>
<div class="xt" style="left:1711.9px;top:408.9px;width:81.5px;overflow:hidden;font-size:15.6px;font-weight:bold;color:#1a1a1a">whatsapp2</div>
<div class="xt" style="left:1795.9px;top:408.9px;width:81.5px;overflow:hidden;font-size:15.6px;font-weight:bold;color:#1a1a1a">groupme2</div>
<div class="xt" style="left:32.5px;top:588.8px;font-size:15.6px;font-weight:bold;color:#222">Most Frequently Used SM at T1</div>
<div class="xt" style="left:32.5px;top:648.9px;font-size:15.6px;font-weight:bold;color:#222">Most Frequently Used SM at T2</div>
<div class="xt" style="left:32.5px;top:609.4px;font-size:15px;letter-spacing:-0.45px;color:#111">Instagram</div>
<div class="xt" style="left:116.5px;top:609.4px;font-size:15px;letter-spacing:-0.45px;color:#111">SnapChat</div>
<div class="xt" style="left:200.5px;top:609.4px;font-size:15px;letter-spacing:-0.45px;color:#111">Tiktok</div>
<div class="xt" style="left:284.6px;top:609.4px;font-size:15px;letter-spacing:-0.45px;color:#111">Youtube</div>
<div class="xt" style="left:368.6px;top:609.4px;font-size:15px;letter-spacing:-0.45px;color:#111">Groupme</div>
<div class="xt" style="left:32.5px;top:669.5px;font-size:15px;letter-spacing:-0.45px;color:#111">Instagram</div>
<div class="xt" style="left:116.5px;top:669.5px;font-size:15px;letter-spacing:-0.45px;color:#111">Snapchat</div>
<div class="xt" style="left:200.5px;top:669.5px;font-size:15px;letter-spacing:-0.45px;color:#111">Tiktok</div>
<div class="xt" style="left:284.6px;top:669.5px;font-size:15px;letter-spacing:-0.45px;color:#111">Youtube</div>
<div class="xt" style="left:368.6px;top:669.5px;font-size:15px;letter-spacing:-0.45px;color:#111">Groupme</div>
<div class="a" style="left:0;top:882.6px;width:1831px;height:52.4px;background:#efefef;border-top:1.5px solid #c6c6c6"></div>
<div class="a" style="left:121.0px;top:882px;width:158px;height:45px;background:#fff;border:1.5px solid #c6c6c6;border-top:none;border-radius:0 0 6px 6px;box-sizing:border-box"></div>
<div class="xt" style="left:121.0px;top:897px;width:158px;text-align:center;font-size:22px;font-weight:bold;color:#2f7d4a">Sheet1</div>
<svg class="a" style="left:0;top:882px" width="400" height="53"><path d="M42.0 19 L32.0 27 L42.0 35 Z" fill="#b3b3b3" stroke="#b3b3b3" stroke-width="2" stroke-linejoin="round"/><path d="M78.0 19 L88.0 27 L78.0 35 Z" fill="#b3b3b3" stroke="#b3b3b3" stroke-width="2" stroke-linejoin="round"/><path d="M307.5 27 H327.5 M317.5 18 V36" stroke="#555" stroke-width="3"/><path d="M355.0 13 V47" stroke="#cfcfcf" stroke-width="1.5"/></svg>
<div class="a" style="left:0;top:935px;width:1831px;height:45px;background:linear-gradient(#e6e6e6,#dcdcdc);border-top:1.5px solid #c3c3c3;box-sizing:border-box"></div>
<div class="xt" style="left:49.3px;top:948px;font-size:23px;color:#555">Ready</div>
</div>
<div class="pdf">
<div class="a" style="left:0;top:0;width:1320px;height:105px;background:linear-gradient(#e9e9e9,#ededed);border-bottom:1.5px solid #d2d2d2;box-sizing:border-box"></div>
<div class="a" style="left:17.3px;top:105px;width:1295.0px;height:900px;background:#fff"></div>
<div class="a" style="left:0;top:105px;width:17px;height:900px;background:linear-gradient(90deg,#9a9a9a,#8a8a8a)"></div>
<svg class="a" style="left:0;top:0" width="1320" height="105">
<circle cx="52.4" cy="52.9" r="11.6" fill="#ee6a5f" stroke="#d8554a" stroke-width="0.8"/>
<circle cx="92.3" cy="52.9" r="11.6" fill="#f5be4f" stroke="#dba43a" stroke-width="0.8"/>
<circle cx="132.2" cy="52.9" r="11.6" fill="#61c554" stroke="#4fae43" stroke-width="0.8"/>
<rect x="199.0" y="38.5" width="36.3" height="28" rx="4.5" fill="none" stroke="#5e5e5e" stroke-width="2.3"/>
<path d="M211.6 38.5 V66.5" stroke="#5e5e5e" stroke-width="2.2"/>
<path d="M202.3 44.3 H207.1" stroke="#5e5e5e" stroke-width="1.6"/>
<path d="M202.3 48.6 H207.1" stroke="#5e5e5e" stroke-width="1.6"/>
<path d="M202.3 53.0 H207.1" stroke="#5e5e5e" stroke-width="1.6"/>
<path d="M247.8 50.0 L254.5 56.5 L261.3 50.0" fill="none" stroke="#5e5e5e" stroke-width="2.3"/>
<circle cx="652.1" cy="52.2" r="15.5" fill="none" stroke="#5e5e5e" stroke-width="2.3"/>
<circle cx="652.1" cy="44.3" r="2" fill="#5e5e5e"/>
<path d="M648.3 49.8 H652.5 V60.3 M648.1 60.3 H657.1" fill="none" stroke="#5e5e5e" stroke-width="2"/>
<circle cx="728.3" cy="48.6" r="11.5" fill="none" stroke="#5e5e5e" stroke-width="2.4"/>
<path d="M736.8 57.4 L745.8 66.2" stroke="#5e5e5e" stroke-width="3.6" stroke-linecap="round"/>
<path d="M723.1 48.6 H733.5" stroke="#5e5e5e" stroke-width="2"/>
<circle cx="797.1" cy="48.6" r="11.5" fill="none" stroke="#5e5e5e" stroke-width="2.4"/>
<path d="M805.6 57.4 L814.6 66.2" stroke="#5e5e5e" stroke-width="3.6" stroke-linecap="round"/>
<path d="M791.9 48.6 H802.3" stroke="#5e5e5e" stroke-width="2"/>
<path d="M797.1 43.4 V53.8" stroke="#5e5e5e" stroke-width="2"/>
<path d="M873.8 43.5 H868.3 Q866.0 43.5 866.0 46.0 V64.5 Q866.0 67.0 868.8 67.0 H889.1 Q891.8 67.0 891.8 64.5 V46.0 Q891.8 43.5 889.3 43.5 H884.3" fill="none" stroke="#5e5e5e" stroke-width="2.4"/>
<path d="M878.9 33.5 V55.0 M872.8 39.0 L878.9 32.8 L885.0 39.0" fill="none" stroke="#5e5e5e" stroke-width="2.4" stroke-linecap="round"/>
<g transform="translate(969.3 60.2) rotate(-40.6)">
<path d="M0 0 L8 -3.9 H34.5 Q37.5 -3.9 37.5 -1 V1 Q37.5 3.9 34.5 3.9 H8 Z M8 -3.9 V3.9 M31 -3.9 V3.9" fill="none" stroke="#5e5e5e" stroke-width="2.1" stroke-linejoin="round"/>
<path d="M-0.5 0 L4 -2.2 V2.2 Z" fill="#5e5e5e"/>
</g>
<path d="M967.3 65.7 H999.5" stroke="#5e5e5e" stroke-width="2.4" stroke-linecap="round"/>
<path d="M1024.9 34.0 V72.0" stroke="#d6d6d6" stroke-width="1.5"/>
<path d="M1046.8 49.5 L1053.3 56.0 L1059.8 49.5" fill="none" stroke="#5e5e5e" stroke-width="2.3"/>
<rect x="1113.7" y="43.6" width="23.2" height="22.8" rx="3.2" fill="none" stroke="#5e5e5e" stroke-width="2.6"/>
<path d="M1144.1 44.6 V41.0 Q1144.1 34.4 1137.3 34.4 H1134.8" fill="none" stroke="#5e5e5e" stroke-width="2.3" stroke-linecap="round"/>
<path d="M1130.3 34.5 L1136.1 30.2 L1136.1 38.8 Z" fill="#5e5e5e" stroke="#5e5e5e" stroke-width="0.8" stroke-linejoin="round"/>
<circle cx="1198.0" cy="52.0" r="15.1" fill="none" stroke="#5e5e5e" stroke-width="2.6"/>
<path d="M1198.0 43.8 L1193.1 54.7 L1202.9 54.7 Z" fill="#5e5e5e" stroke="#5e5e5e" stroke-width="1" stroke-linejoin="round"/>
<path d="M1193.1 54.7 L1191.2 65.0 M1202.9 54.7 L1204.7 65.0 M1193.1 54.7 H1202.9" fill="none" stroke="#5e5e5e" stroke-width="2"/>
<circle cx="1271.9" cy="48.5" r="11.7" fill="none" stroke="#5e5e5e" stroke-width="2.7"/>
<path d="M1280.6 57.5 L1289.3 66.0" stroke="#5e5e5e" stroke-width="3.6" stroke-linecap="round"/>
</svg>
<div class="pt" style="left:289.5px;top:27.0px;font-size:26px;letter-spacing:0.4px;font-weight:bold;color:#3f3f3f">FA_T1.pdf</div>
<div class="pt" style="left:289.5px;top:58.3px;font-size:21.5px;letter-spacing:0.45px;color:#6b6b6b">Page 1 of 2</div>
<div class="pt" style="left:117.8px;top:176.6px;font-size:33.5px;letter-spacing:-1.1px;font-weight:bold;color:#4a6fa8">Exploratory Factor Analysis T1</div>
<div class="pt" style="left:117.8px;top:238.9px;font-size:19.5px;color:#2b2b2b">Factor Loadings</div>
<div class="a" style="left:117.8px;top:265.7px;width:842.5px;height:1.6px;background:#2e2e2e"></div>
<div class="a" style="left:321.7px;top:302.9px;width:470.4px;height:1.6px;background:#2e2e2e"></div>
<div class="a" style="left:117.8px;top:340.5px;width:842.5px;height:1.6px;background:#2e2e2e"></div>
<div class="a" style="left:117.8px;top:891.1px;width:841.8px;height:2.6px;background:#2e2e2e"></div>
<div class="pt" style="left:456.3px;top:275.5px;width:200px;text-align:center;font-size:19.5px;font-weight:bold;color:#2b2b2b">Factor</div>
<div class="pt" style="left:267.7px;top:314.1px;width:200px;text-align:center;font-size:19.5px;font-weight:bold;color:#2b2b2b">1</div>
<div class="pt" style="left:360.7px;top:314.1px;width:200px;text-align:center;font-size:19.5px;font-weight:bold;color:#2b2b2b">2</div>
<div class="pt" style="left:454.3px;top:314.1px;width:200px;text-align:center;font-size:19.5px;font-weight:bold;color:#2b2b2b">3</div>
<div class="pt" style="left:548.1px;top:314.1px;width:200px;text-align:center;font-size:19.5px;font-weight:bold;color:#2b2b2b">4</div>
<div class="pt" style="left:643.9px;top:314.1px;width:200px;text-align:center;font-size:19.5px;font-weight:bold;color:#2b2b2b">5</div>
<div class="pt" style="left:776.1px;top:314.1px;width:200px;text-align:center;font-size:19.5px;font-weight:bold;color:#2b2b2b">Uniqueness</div>
<div class="pt" style="left:130.2px;top:357.7px;font-size:19.5px">buy_1</div>
<div class="pt" style="left:347.5px;top:357.7px;font-size:19.5px">0.757</div>
<div class="pt" style="left:812.0px;top:357.7px;width:120px;text-align:right;font-size:19.5px">0.34761</div>
<div class="pt" style="left:130.2px;top:387.1px;font-size:19.5px">wear_1</div>
<div class="pt" style="left:347.5px;top:387.1px;font-size:19.5px">0.751</div>
<div class="pt" style="left:812.0px;top:387.1px;width:120px;text-align:right;font-size:19.5px">0.45007</div>
<div class="pt" style="left:130.2px;top:416.5px;font-size:19.5px">do_1</div>
<div class="pt" style="left:347.5px;top:416.5px;font-size:19.5px">0.596</div>
<div class="pt" style="left:812.0px;top:416.5px;width:120px;text-align:right;font-size:19.5px">0.54113</div>
<div class="pt" style="left:130.2px;top:445.9px;font-size:19.5px">eat_1</div>
<div class="pt" style="left:347.5px;top:445.9px;font-size:19.5px">0.571</div>
<div class="pt" style="left:812.0px;top:445.9px;width:120px;text-align:right;font-size:19.5px">0.63457</div>
<div class="pt" style="left:130.2px;top:475.3px;font-size:19.5px">stay_informed_1</div>
<div class="pt" style="left:441.0px;top:475.3px;font-size:19.5px">0.573</div>
<div class="pt" style="left:812.0px;top:475.3px;width:120px;text-align:right;font-size:19.5px">0.56284</div>
<div class="pt" style="left:130.2px;top:504.7px;font-size:19.5px">friends_1</div>
<div class="pt" style="left:441.0px;top:504.7px;font-size:19.5px">0.568</div>
<div class="pt" style="left:812.0px;top:504.7px;width:120px;text-align:right;font-size:19.5px">0.65961</div>
<div class="pt" style="left:130.2px;top:534.1px;font-size:19.5px">family_1</div>
<div class="pt" style="left:441.0px;top:534.1px;font-size:19.5px">0.525</div>
<div class="pt" style="left:812.0px;top:534.1px;width:120px;text-align:right;font-size:19.5px">0.69949</div>
<div class="pt" style="left:130.2px;top:563.5px;font-size:19.5px">relax_1</div>
<div class="pt" style="left:441.0px;top:563.5px;font-size:19.5px">0.451</div>
<div class="pt" style="left:812.0px;top:563.5px;width:120px;text-align:right;font-size:19.5px">0.65135</div>
<div class="pt" style="left:130.2px;top:592.9px;font-size:19.5px">entertain_1</div>
<div class="pt" style="left:441.0px;top:592.9px;font-size:19.5px">0.346</div>
<div class="pt" style="left:812.0px;top:592.9px;width:120px;text-align:right;font-size:19.5px">0.76265</div>
<div class="pt" style="left:130.2px;top:622.3px;font-size:19.5px">academic_1</div>
<div class="pt" style="left:441.0px;top:622.3px;font-size:19.5px">0.344</div>
<div class="pt" style="left:812.0px;top:622.3px;width:120px;text-align:right;font-size:19.5px">0.81712</div>
<div class="pt" style="left:130.2px;top:651.7px;font-size:19.5px">comments_1</div>
<div class="pt" style="left:534.0px;top:651.7px;font-size:19.5px">0.841</div>
<div class="pt" style="left:812.0px;top:651.7px;width:120px;text-align:right;font-size:19.5px">0.28115</div>
<div class="pt" style="left:130.2px;top:681.1px;font-size:19.5px">support_1</div>
<div class="pt" style="left:534.0px;top:681.1px;font-size:19.5px">0.572</div>
<div class="pt" style="left:812.0px;top:681.1px;width:120px;text-align:right;font-size:19.5px">0.53612</div>
<div class="pt" style="left:130.2px;top:710.5px;font-size:19.5px">opinion_1</div>
<div class="pt" style="left:534.0px;top:710.5px;font-size:19.5px">0.353</div>
<div class="pt" style="left:812.0px;top:710.5px;width:120px;text-align:right;font-size:19.5px">0.64895</div>
<div class="pt" style="left:130.2px;top:739.9px;font-size:19.5px">romance_1</div>
<div class="pt" style="left:627.0px;top:739.9px;font-size:19.5px">0.998</div>
<div class="pt" style="left:812.0px;top:739.9px;width:120px;text-align:right;font-size:19.5px">0.00500</div>
<div class="pt" style="left:130.2px;top:769.3px;font-size:19.5px">hookup_1</div>
<div class="pt" style="left:627.0px;top:769.3px;font-size:19.5px">0.425</div>
<div class="pt" style="left:812.0px;top:769.3px;width:120px;text-align:right;font-size:19.5px">0.77975</div>
<div class="pt" style="left:130.2px;top:798.7px;font-size:19.5px">meet_1</div>
<div class="pt" style="left:812.0px;top:798.7px;width:120px;text-align:right;font-size:19.5px">0.83951</div>
<div class="pt" style="left:130.2px;top:828.1px;font-size:19.5px">forget_1</div>
<div class="pt" style="left:723.3px;top:828.1px;font-size:19.5px">0.884</div>
<div class="pt" style="left:812.0px;top:828.1px;width:120px;text-align:right;font-size:19.5px">0.21914</div>
<div class="pt" style="left:130.2px;top:857.5px;font-size:19.5px">compare_1</div>
<div class="pt" style="left:812.0px;top:857.5px;width:120px;text-align:right;font-size:19.5px">0.69470</div>
<div class="pt" style="left:131.3px;top:906.7px;font-size:19.5px"><i>Note.</i> 'Maximum likelihood' extraction method was used in combination with a 'oblimin' rotation</div>
</div>
</body></html>
